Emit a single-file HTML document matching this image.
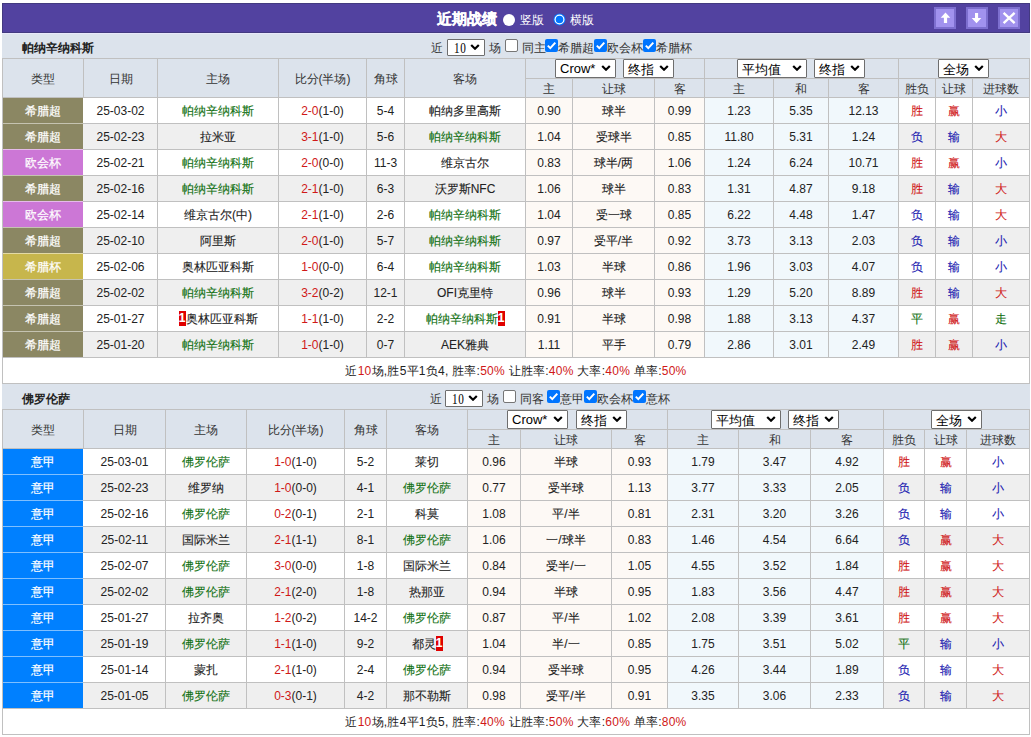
<!DOCTYPE html>
<html><head><meta charset="utf-8"><title>近期战绩</title>
<style>
html,body{margin:0;padding:0;background:#fff;}
body{position:relative;width:1031px;height:737px;overflow:hidden;font-family:'Liberation Sans', sans-serif;font-size:12px;color:#333;}
</style></head><body>
<div style="position:absolute;left:2px;top:3px;width:1028px;height:30px;box-sizing:border-box;background:#5242a0;border:1px solid #433a80;"></div><div style="position:absolute;left:437px;top:9px;white-space:nowrap;color:#fff;font:bold 15px 'Liberation Sans', sans-serif;line-height:20px;-webkit-text-stroke:0.3px #fff">近期战绩</div><div style="position:absolute;left:503px;top:14px;width:12px;height:12px;box-sizing:border-box;border-radius:50%;background:#fff;"></div><div style="position:absolute;left:520px;top:10px;white-space:nowrap;color:#fff;font:12px 'Liberation Sans', sans-serif;line-height:20px">竖版</div><svg style="position:absolute;left:553px;top:13px" width="13" height="13" viewBox="0 0 13 13"><circle cx="6.5" cy="6.5" r="6" fill="#0075ff"/><circle cx="6.5" cy="6.5" r="5" fill="#fff"/><circle cx="6.5" cy="6.5" r="3.8" fill="#0075ff"/></svg><div style="position:absolute;left:570px;top:10px;white-space:nowrap;color:#fff;font:12px 'Liberation Sans', sans-serif;line-height:20px">横版</div><div style="position:absolute;left:934px;top:7px;width:22px;height:22px;box-sizing:border-box;background:#a192ee;border:2px solid #7d6fcf;"><div style="position:absolute;left:-2px;top:-2px"><svg width="22" height="22" viewBox="0 0 22 22"><path d="M11.5 5.6 L16.3 10.8 L13.1 10.8 L13.1 16 L9.9 16 L9.9 10.8 L6.7 10.8 Z" fill="#fff"/></svg></div></div><div style="position:absolute;left:966px;top:7px;width:22px;height:22px;box-sizing:border-box;background:#a192ee;border:2px solid #7d6fcf;"><div style="position:absolute;left:-2px;top:-2px"><svg width="22" height="22" viewBox="0 0 22 22"><path d="M10.5 16.2 L15.3 11 L12.1 11 L12.1 6 L9 6 L9 11 L5.7 11 Z" fill="#fff"/></svg></div></div><div style="position:absolute;left:998px;top:7px;width:22px;height:22px;box-sizing:border-box;background:#a192ee;border:2px solid #7d6fcf;"><div style="position:absolute;left:-2px;top:-2px"><svg width="22" height="22" viewBox="0 0 22 22"><path d="M5.6 5.8 L16.6 16.2 M16.6 5.8 L5.6 16.2" stroke="#fff" stroke-width="2.4"/></svg></div></div><div style="position:absolute;left:2px;top:33px;width:1028px;height:1px;background:#e8e8fa;"></div><div style="position:absolute;left:2px;top:34px;width:1028px;height:24px;background:#dce3ec;"></div><div style="position:absolute;left:22px;top:41px;white-space:nowrap;font:bold 12px 'Liberation Sans', sans-serif;color:#222;line-height:14px">帕纳辛纳科斯</div><div style="position:absolute;left:431px;top:41px;white-space:nowrap;font:12px 'Liberation Sans', sans-serif;color:#333;line-height:14px;">近</div><div style="position:absolute;left:447px;top:39px;width:38px;height:17px;box-sizing:border-box;border:1px solid #6e6e6e;border-radius:1px;background:#fff;"><span style="position:absolute;left:6px;top:1px;line-height:15px;font:14px 'Liberation Serif', serif;color:#000;white-space:nowrap"><span style="display:inline-block;transform:scaleX(0.8);transform-origin:0 0;letter-spacing:0.8px">10</span></span><svg style="position:absolute;left:22px;top:4px" width="10" height="6" viewBox="0 0 10 6"><path d="M1.2 1 L5.0 4.7 L8.8 1" fill="none" stroke="#000" stroke-width="2.2"/></svg></div><div style="position:absolute;left:489px;top:41px;white-space:nowrap;font:12px 'Liberation Sans', sans-serif;color:#333;line-height:14px;">场</div><div style="position:absolute;left:505px;top:39px;width:13px;height:13px;box-sizing:border-box;border:1px solid #767676;border-radius:2px;background:#fff;"></div><div style="position:absolute;left:522px;top:41px;white-space:nowrap;font:12px 'Liberation Sans', sans-serif;color:#333;line-height:14px;">同主</div><div style="position:absolute;left:545px;top:39px;width:13px;height:13px;"><svg width="13" height="13" viewBox="0 0 13 13" style="position:absolute;left:0;top:0"><rect x="0" y="0" width="13" height="13" rx="2" fill="#0075ff"/><path d="M2.8 6.6 L5.3 9.1 L10.3 3.6" fill="none" stroke="#fff" stroke-width="2"/></svg></div><div style="position:absolute;left:558px;top:41px;white-space:nowrap;font:12px 'Liberation Sans', sans-serif;color:#333;line-height:14px;">希腊超</div><div style="position:absolute;left:594px;top:39px;width:13px;height:13px;"><svg width="13" height="13" viewBox="0 0 13 13" style="position:absolute;left:0;top:0"><rect x="0" y="0" width="13" height="13" rx="2" fill="#0075ff"/><path d="M2.8 6.6 L5.3 9.1 L10.3 3.6" fill="none" stroke="#fff" stroke-width="2"/></svg></div><div style="position:absolute;left:607px;top:41px;white-space:nowrap;font:12px 'Liberation Sans', sans-serif;color:#333;line-height:14px;">欧会杯</div><div style="position:absolute;left:643px;top:39px;width:13px;height:13px;"><svg width="13" height="13" viewBox="0 0 13 13" style="position:absolute;left:0;top:0"><rect x="0" y="0" width="13" height="13" rx="2" fill="#0075ff"/><path d="M2.8 6.6 L5.3 9.1 L10.3 3.6" fill="none" stroke="#fff" stroke-width="2"/></svg></div><div style="position:absolute;left:656px;top:41px;white-space:nowrap;font:12px 'Liberation Sans', sans-serif;color:#333;line-height:14px;">希腊杯</div><div style="position:absolute;left:2px;top:58px;width:1028px;height:39px;background:#dce3ec;"></div><div style="position:absolute;left:2px;top:97px;width:1028px;height:26px;background:#ffffff;"></div><div style="position:absolute;left:525px;top:97px;width:179px;height:26px;background:#fdf9f5;"></div><div style="position:absolute;left:704px;top:97px;width:194px;height:26px;background:#f1f8fc;"></div><div style="position:absolute;left:2px;top:97px;width:81px;height:26px;background:#8b8763;"></div><div style="position:absolute;left:2px;top:123px;width:1028px;height:26px;background:#efefef;"></div><div style="position:absolute;left:525px;top:123px;width:179px;height:26px;background:#fdf9f5;"></div><div style="position:absolute;left:704px;top:123px;width:194px;height:26px;background:#f1f8fc;"></div><div style="position:absolute;left:2px;top:123px;width:81px;height:26px;background:#8b8763;"></div><div style="position:absolute;left:2px;top:149px;width:1028px;height:26px;background:#ffffff;"></div><div style="position:absolute;left:525px;top:149px;width:179px;height:26px;background:#fdf9f5;"></div><div style="position:absolute;left:704px;top:149px;width:194px;height:26px;background:#f1f8fc;"></div><div style="position:absolute;left:2px;top:149px;width:81px;height:26px;background:#cc77d6;"></div><div style="position:absolute;left:2px;top:175px;width:1028px;height:26px;background:#efefef;"></div><div style="position:absolute;left:525px;top:175px;width:179px;height:26px;background:#fdf9f5;"></div><div style="position:absolute;left:704px;top:175px;width:194px;height:26px;background:#f1f8fc;"></div><div style="position:absolute;left:2px;top:175px;width:81px;height:26px;background:#8b8763;"></div><div style="position:absolute;left:2px;top:201px;width:1028px;height:26px;background:#ffffff;"></div><div style="position:absolute;left:525px;top:201px;width:179px;height:26px;background:#fdf9f5;"></div><div style="position:absolute;left:704px;top:201px;width:194px;height:26px;background:#f1f8fc;"></div><div style="position:absolute;left:2px;top:201px;width:81px;height:26px;background:#cc77d6;"></div><div style="position:absolute;left:2px;top:227px;width:1028px;height:26px;background:#efefef;"></div><div style="position:absolute;left:525px;top:227px;width:179px;height:26px;background:#fdf9f5;"></div><div style="position:absolute;left:704px;top:227px;width:194px;height:26px;background:#f1f8fc;"></div><div style="position:absolute;left:2px;top:227px;width:81px;height:26px;background:#8b8763;"></div><div style="position:absolute;left:2px;top:253px;width:1028px;height:26px;background:#ffffff;"></div><div style="position:absolute;left:525px;top:253px;width:179px;height:26px;background:#fdf9f5;"></div><div style="position:absolute;left:704px;top:253px;width:194px;height:26px;background:#f1f8fc;"></div><div style="position:absolute;left:2px;top:253px;width:81px;height:26px;background:#c7b64c;"></div><div style="position:absolute;left:2px;top:279px;width:1028px;height:26px;background:#efefef;"></div><div style="position:absolute;left:525px;top:279px;width:179px;height:26px;background:#fdf9f5;"></div><div style="position:absolute;left:704px;top:279px;width:194px;height:26px;background:#f1f8fc;"></div><div style="position:absolute;left:2px;top:279px;width:81px;height:26px;background:#8b8763;"></div><div style="position:absolute;left:2px;top:305px;width:1028px;height:26px;background:#ffffff;"></div><div style="position:absolute;left:525px;top:305px;width:179px;height:26px;background:#fdf9f5;"></div><div style="position:absolute;left:704px;top:305px;width:194px;height:26px;background:#f1f8fc;"></div><div style="position:absolute;left:2px;top:305px;width:81px;height:26px;background:#8b8763;"></div><div style="position:absolute;left:2px;top:331px;width:1028px;height:26px;background:#efefef;"></div><div style="position:absolute;left:525px;top:331px;width:179px;height:26px;background:#fdf9f5;"></div><div style="position:absolute;left:704px;top:331px;width:194px;height:26px;background:#f1f8fc;"></div><div style="position:absolute;left:2px;top:331px;width:81px;height:26px;background:#8b8763;"></div><div style="position:absolute;left:2px;top:357px;width:1028px;height:26px;background:#fff;"></div><div style="position:absolute;left:2px;top:58px;width:1028px;height:1px;background:#c0c0c0;"></div><div style="position:absolute;left:2px;top:97px;width:1028px;height:1px;background:#c0c0c0;"></div><div style="position:absolute;left:525px;top:78px;width:505px;height:1px;background:#c0c0c0;"></div><div style="position:absolute;left:2px;top:123px;width:1028px;height:1px;background:#c0c0c0;"></div><div style="position:absolute;left:2px;top:149px;width:1028px;height:1px;background:#c0c0c0;"></div><div style="position:absolute;left:2px;top:175px;width:1028px;height:1px;background:#c0c0c0;"></div><div style="position:absolute;left:2px;top:201px;width:1028px;height:1px;background:#c0c0c0;"></div><div style="position:absolute;left:2px;top:227px;width:1028px;height:1px;background:#c0c0c0;"></div><div style="position:absolute;left:2px;top:253px;width:1028px;height:1px;background:#c0c0c0;"></div><div style="position:absolute;left:2px;top:279px;width:1028px;height:1px;background:#c0c0c0;"></div><div style="position:absolute;left:2px;top:305px;width:1028px;height:1px;background:#c0c0c0;"></div><div style="position:absolute;left:2px;top:331px;width:1028px;height:1px;background:#c0c0c0;"></div><div style="position:absolute;left:2px;top:357px;width:1028px;height:1px;background:#c0c0c0;"></div><div style="position:absolute;left:2px;top:383px;width:1028px;height:1px;background:#c0c0c0;"></div><div style="position:absolute;left:2px;top:58px;width:1px;height:326px;background:#c0c0c0;"></div><div style="position:absolute;left:83px;top:58px;width:1px;height:300px;background:#c0c0c0;"></div><div style="position:absolute;left:157px;top:58px;width:1px;height:300px;background:#c0c0c0;"></div><div style="position:absolute;left:278px;top:58px;width:1px;height:300px;background:#c0c0c0;"></div><div style="position:absolute;left:366px;top:58px;width:1px;height:300px;background:#c0c0c0;"></div><div style="position:absolute;left:404px;top:58px;width:1px;height:300px;background:#c0c0c0;"></div><div style="position:absolute;left:525px;top:58px;width:1px;height:300px;background:#c0c0c0;"></div><div style="position:absolute;left:572px;top:78px;width:1px;height:280px;background:#c0c0c0;"></div><div style="position:absolute;left:654px;top:78px;width:1px;height:280px;background:#c0c0c0;"></div><div style="position:absolute;left:704px;top:58px;width:1px;height:300px;background:#c0c0c0;"></div><div style="position:absolute;left:773px;top:78px;width:1px;height:280px;background:#c0c0c0;"></div><div style="position:absolute;left:828px;top:78px;width:1px;height:280px;background:#c0c0c0;"></div><div style="position:absolute;left:898px;top:58px;width:1px;height:300px;background:#c0c0c0;"></div><div style="position:absolute;left:935px;top:78px;width:1px;height:280px;background:#c0c0c0;"></div><div style="position:absolute;left:972px;top:78px;width:1px;height:280px;background:#c0c0c0;"></div><div style="position:absolute;left:1029px;top:58px;width:1px;height:326px;background:#c0c0c0;"></div><div style="position:absolute;left:3px;top:123px;width:80px;height:1px;background:#c5c3b1;"></div><div style="position:absolute;left:3px;top:149px;width:80px;height:1px;background:#e5bbea;"></div><div style="position:absolute;left:3px;top:175px;width:80px;height:1px;background:#c5c3b1;"></div><div style="position:absolute;left:3px;top:201px;width:80px;height:1px;background:#e5bbea;"></div><div style="position:absolute;left:3px;top:227px;width:80px;height:1px;background:#c5c3b1;"></div><div style="position:absolute;left:3px;top:253px;width:80px;height:1px;background:#e3daa5;"></div><div style="position:absolute;left:3px;top:279px;width:80px;height:1px;background:#c5c3b1;"></div><div style="position:absolute;left:3px;top:305px;width:80px;height:1px;background:#c5c3b1;"></div><div style="position:absolute;left:3px;top:331px;width:80px;height:1px;background:#c5c3b1;"></div><div style="position:absolute;left:83px;top:98px;width:1px;height:25px;background:#ffffff;"></div><div style="position:absolute;left:83px;top:124px;width:1px;height:25px;background:#efefef;"></div><div style="position:absolute;left:83px;top:150px;width:1px;height:25px;background:#ffffff;"></div><div style="position:absolute;left:83px;top:176px;width:1px;height:25px;background:#efefef;"></div><div style="position:absolute;left:83px;top:202px;width:1px;height:25px;background:#ffffff;"></div><div style="position:absolute;left:83px;top:228px;width:1px;height:25px;background:#efefef;"></div><div style="position:absolute;left:83px;top:254px;width:1px;height:25px;background:#ffffff;"></div><div style="position:absolute;left:83px;top:280px;width:1px;height:25px;background:#efefef;"></div><div style="position:absolute;left:83px;top:306px;width:1px;height:25px;background:#ffffff;"></div><div style="position:absolute;left:83px;top:332px;width:1px;height:25px;background:#efefef;"></div><div style="font:12px 'Liberation Sans', sans-serif;color:#222;color:#333;position:absolute;left:3px;top:60px;width:80px;height:38px;line-height:38px;text-align:center;white-space:nowrap;">类型</div><div style="font:12px 'Liberation Sans', sans-serif;color:#222;color:#333;position:absolute;left:84px;top:60px;width:73px;height:38px;line-height:38px;text-align:center;white-space:nowrap;">日期</div><div style="font:12px 'Liberation Sans', sans-serif;color:#222;color:#333;position:absolute;left:158px;top:60px;width:120px;height:38px;line-height:38px;text-align:center;white-space:nowrap;">主场</div><div style="font:12px 'Liberation Sans', sans-serif;color:#222;color:#333;position:absolute;left:279px;top:60px;width:87px;height:38px;line-height:38px;text-align:center;white-space:nowrap;">比分(半场)</div><div style="font:12px 'Liberation Sans', sans-serif;color:#222;color:#333;position:absolute;left:367px;top:60px;width:37px;height:38px;line-height:38px;text-align:center;white-space:nowrap;">角球</div><div style="font:12px 'Liberation Sans', sans-serif;color:#222;color:#333;position:absolute;left:405px;top:60px;width:120px;height:38px;line-height:38px;text-align:center;white-space:nowrap;">客场</div><div style="font:12px 'Liberation Sans', sans-serif;color:#222;color:#333;position:absolute;left:526px;top:80px;width:46px;height:18px;line-height:18px;text-align:center;white-space:nowrap;">主</div><div style="font:12px 'Liberation Sans', sans-serif;color:#222;color:#333;position:absolute;left:573px;top:80px;width:81px;height:18px;line-height:18px;text-align:center;white-space:nowrap;">让球</div><div style="font:12px 'Liberation Sans', sans-serif;color:#222;color:#333;position:absolute;left:655px;top:80px;width:49px;height:18px;line-height:18px;text-align:center;white-space:nowrap;">客</div><div style="font:12px 'Liberation Sans', sans-serif;color:#222;color:#333;position:absolute;left:705px;top:80px;width:68px;height:18px;line-height:18px;text-align:center;white-space:nowrap;">主</div><div style="font:12px 'Liberation Sans', sans-serif;color:#222;color:#333;position:absolute;left:774px;top:80px;width:54px;height:18px;line-height:18px;text-align:center;white-space:nowrap;">和</div><div style="font:12px 'Liberation Sans', sans-serif;color:#222;color:#333;position:absolute;left:829px;top:80px;width:69px;height:18px;line-height:18px;text-align:center;white-space:nowrap;">客</div><div style="font:12px 'Liberation Sans', sans-serif;color:#222;color:#333;position:absolute;left:899px;top:80px;width:36px;height:18px;line-height:18px;text-align:center;white-space:nowrap;">胜负</div><div style="font:12px 'Liberation Sans', sans-serif;color:#222;color:#333;position:absolute;left:936px;top:80px;width:36px;height:18px;line-height:18px;text-align:center;white-space:nowrap;">让球</div><div style="font:12px 'Liberation Sans', sans-serif;color:#222;color:#333;position:absolute;left:973px;top:80px;width:56px;height:18px;line-height:18px;text-align:center;white-space:nowrap;">进球数</div><div style="position:absolute;left:555px;top:59px;width:61px;height:19px;box-sizing:border-box;border:1px solid #6e6e6e;border-radius:1px;background:#fff;"><span style="position:absolute;left:4px;top:1px;line-height:17px;font:13px 'Liberation Sans', sans-serif;color:#000;white-space:nowrap">Crow*</span><svg style="position:absolute;left:45px;top:5px" width="10" height="6" viewBox="0 0 10 6"><path d="M1.2 1 L5.0 4.7 L8.8 1" fill="none" stroke="#000" stroke-width="2.2"/></svg></div><div style="position:absolute;left:623px;top:59px;width:51px;height:19px;box-sizing:border-box;border:1px solid #6e6e6e;border-radius:1px;background:#fff;"><span style="position:absolute;left:4px;top:1px;line-height:17px;font:13px 'Liberation Sans', sans-serif;color:#000;white-space:nowrap">终指</span><svg style="position:absolute;left:35px;top:5px" width="10" height="6" viewBox="0 0 10 6"><path d="M1.2 1 L5.0 4.7 L8.8 1" fill="none" stroke="#000" stroke-width="2.2"/></svg></div><div style="position:absolute;left:737px;top:59px;width:70px;height:19px;box-sizing:border-box;border:1px solid #6e6e6e;border-radius:1px;background:#fff;"><span style="position:absolute;left:4px;top:1px;line-height:17px;font:13px 'Liberation Sans', sans-serif;color:#000;white-space:nowrap">平均值</span><svg style="position:absolute;left:54px;top:5px" width="10" height="6" viewBox="0 0 10 6"><path d="M1.2 1 L5.0 4.7 L8.8 1" fill="none" stroke="#000" stroke-width="2.2"/></svg></div><div style="position:absolute;left:814px;top:59px;width:51px;height:19px;box-sizing:border-box;border:1px solid #6e6e6e;border-radius:1px;background:#fff;"><span style="position:absolute;left:4px;top:1px;line-height:17px;font:13px 'Liberation Sans', sans-serif;color:#000;white-space:nowrap">终指</span><svg style="position:absolute;left:35px;top:5px" width="10" height="6" viewBox="0 0 10 6"><path d="M1.2 1 L5.0 4.7 L8.8 1" fill="none" stroke="#000" stroke-width="2.2"/></svg></div><div style="position:absolute;left:938px;top:59px;width:51px;height:19px;box-sizing:border-box;border:1px solid #6e6e6e;border-radius:1px;background:#fff;"><span style="position:absolute;left:4px;top:1px;line-height:17px;font:13px 'Liberation Sans', sans-serif;color:#000;white-space:nowrap">全场</span><svg style="position:absolute;left:35px;top:5px" width="10" height="6" viewBox="0 0 10 6"><path d="M1.2 1 L5.0 4.7 L8.8 1" fill="none" stroke="#000" stroke-width="2.2"/></svg></div><div style="font:12px 'Liberation Sans', sans-serif;color:#fff;-webkit-text-stroke:0.2px #fff;position:absolute;left:3px;top:99px;width:80px;height:25px;line-height:25px;text-align:center;white-space:nowrap;">希腊超</div><div style="font:12px 'Liberation Sans', sans-serif;color:#222;position:absolute;left:84px;top:99px;width:73px;height:25px;line-height:25px;text-align:center;white-space:nowrap;">25-03-02</div><div style="font:12px 'Liberation Sans', sans-serif;color:#222;-webkit-text-stroke:0.1px currentColor;color:#107010;position:absolute;left:158px;top:99px;width:120px;height:25px;line-height:25px;text-align:center;white-space:nowrap;">帕纳辛纳科斯</div><div style="font:12px 'Liberation Sans', sans-serif;color:#222;position:absolute;left:279px;top:99px;width:87px;height:25px;line-height:25px;text-align:center;white-space:nowrap;"><span style="color:#d01818">2-0</span>(1-0)</div><div style="font:12px 'Liberation Sans', sans-serif;color:#222;position:absolute;left:367px;top:99px;width:37px;height:25px;line-height:25px;text-align:center;white-space:nowrap;">5-4</div><div style="font:12px 'Liberation Sans', sans-serif;color:#222;-webkit-text-stroke:0.1px currentColor;position:absolute;left:405px;top:99px;width:120px;height:25px;line-height:25px;text-align:center;white-space:nowrap;">帕纳多里高斯</div><div style="font:12px 'Liberation Sans', sans-serif;color:#222;position:absolute;left:526px;top:99px;width:46px;height:25px;line-height:25px;text-align:center;white-space:nowrap;">0.90</div><div style="font:12px 'Liberation Sans', sans-serif;color:#222;-webkit-text-stroke:0.1px currentColor;position:absolute;left:573px;top:99px;width:81px;height:25px;line-height:25px;text-align:center;white-space:nowrap;">球半</div><div style="font:12px 'Liberation Sans', sans-serif;color:#222;position:absolute;left:655px;top:99px;width:49px;height:25px;line-height:25px;text-align:center;white-space:nowrap;">0.99</div><div style="font:12px 'Liberation Sans', sans-serif;color:#222;position:absolute;left:705px;top:99px;width:68px;height:25px;line-height:25px;text-align:center;white-space:nowrap;">1.23</div><div style="font:12px 'Liberation Sans', sans-serif;color:#222;position:absolute;left:774px;top:99px;width:54px;height:25px;line-height:25px;text-align:center;white-space:nowrap;">5.35</div><div style="font:12px 'Liberation Sans', sans-serif;color:#222;position:absolute;left:829px;top:99px;width:69px;height:25px;line-height:25px;text-align:center;white-space:nowrap;">12.13</div><div style="font:12px 'Liberation Sans', sans-serif;color:#222;-webkit-text-stroke:0.1px currentColor;color:#d01818;position:absolute;left:899px;top:99px;width:36px;height:25px;line-height:25px;text-align:center;white-space:nowrap;">胜</div><div style="font:12px 'Liberation Sans', sans-serif;color:#222;-webkit-text-stroke:0.1px currentColor;color:#d01818;position:absolute;left:936px;top:99px;width:36px;height:25px;line-height:25px;text-align:center;white-space:nowrap;">赢</div><div style="font:12px 'Liberation Sans', sans-serif;color:#222;-webkit-text-stroke:0.1px currentColor;color:#1818b0;position:absolute;left:973px;top:99px;width:56px;height:25px;line-height:25px;text-align:center;white-space:nowrap;">小</div><div style="font:12px 'Liberation Sans', sans-serif;color:#fff;-webkit-text-stroke:0.2px #fff;position:absolute;left:3px;top:125px;width:80px;height:25px;line-height:25px;text-align:center;white-space:nowrap;">希腊超</div><div style="font:12px 'Liberation Sans', sans-serif;color:#222;position:absolute;left:84px;top:125px;width:73px;height:25px;line-height:25px;text-align:center;white-space:nowrap;">25-02-23</div><div style="font:12px 'Liberation Sans', sans-serif;color:#222;-webkit-text-stroke:0.1px currentColor;position:absolute;left:158px;top:125px;width:120px;height:25px;line-height:25px;text-align:center;white-space:nowrap;">拉米亚</div><div style="font:12px 'Liberation Sans', sans-serif;color:#222;position:absolute;left:279px;top:125px;width:87px;height:25px;line-height:25px;text-align:center;white-space:nowrap;"><span style="color:#d01818">3-1</span>(1-0)</div><div style="font:12px 'Liberation Sans', sans-serif;color:#222;position:absolute;left:367px;top:125px;width:37px;height:25px;line-height:25px;text-align:center;white-space:nowrap;">5-6</div><div style="font:12px 'Liberation Sans', sans-serif;color:#222;-webkit-text-stroke:0.1px currentColor;color:#107010;position:absolute;left:405px;top:125px;width:120px;height:25px;line-height:25px;text-align:center;white-space:nowrap;">帕纳辛纳科斯</div><div style="font:12px 'Liberation Sans', sans-serif;color:#222;position:absolute;left:526px;top:125px;width:46px;height:25px;line-height:25px;text-align:center;white-space:nowrap;">1.04</div><div style="font:12px 'Liberation Sans', sans-serif;color:#222;-webkit-text-stroke:0.1px currentColor;position:absolute;left:573px;top:125px;width:81px;height:25px;line-height:25px;text-align:center;white-space:nowrap;">受球半</div><div style="font:12px 'Liberation Sans', sans-serif;color:#222;position:absolute;left:655px;top:125px;width:49px;height:25px;line-height:25px;text-align:center;white-space:nowrap;">0.85</div><div style="font:12px 'Liberation Sans', sans-serif;color:#222;position:absolute;left:705px;top:125px;width:68px;height:25px;line-height:25px;text-align:center;white-space:nowrap;">11.80</div><div style="font:12px 'Liberation Sans', sans-serif;color:#222;position:absolute;left:774px;top:125px;width:54px;height:25px;line-height:25px;text-align:center;white-space:nowrap;">5.31</div><div style="font:12px 'Liberation Sans', sans-serif;color:#222;position:absolute;left:829px;top:125px;width:69px;height:25px;line-height:25px;text-align:center;white-space:nowrap;">1.24</div><div style="font:12px 'Liberation Sans', sans-serif;color:#222;-webkit-text-stroke:0.1px currentColor;color:#1818b0;position:absolute;left:899px;top:125px;width:36px;height:25px;line-height:25px;text-align:center;white-space:nowrap;">负</div><div style="font:12px 'Liberation Sans', sans-serif;color:#222;-webkit-text-stroke:0.1px currentColor;color:#1818b0;position:absolute;left:936px;top:125px;width:36px;height:25px;line-height:25px;text-align:center;white-space:nowrap;">输</div><div style="font:12px 'Liberation Sans', sans-serif;color:#222;-webkit-text-stroke:0.1px currentColor;color:#d01818;position:absolute;left:973px;top:125px;width:56px;height:25px;line-height:25px;text-align:center;white-space:nowrap;">大</div><div style="font:12px 'Liberation Sans', sans-serif;color:#fff;-webkit-text-stroke:0.2px #fff;position:absolute;left:3px;top:151px;width:80px;height:25px;line-height:25px;text-align:center;white-space:nowrap;">欧会杯</div><div style="font:12px 'Liberation Sans', sans-serif;color:#222;position:absolute;left:84px;top:151px;width:73px;height:25px;line-height:25px;text-align:center;white-space:nowrap;">25-02-21</div><div style="font:12px 'Liberation Sans', sans-serif;color:#222;-webkit-text-stroke:0.1px currentColor;color:#107010;position:absolute;left:158px;top:151px;width:120px;height:25px;line-height:25px;text-align:center;white-space:nowrap;">帕纳辛纳科斯</div><div style="font:12px 'Liberation Sans', sans-serif;color:#222;position:absolute;left:279px;top:151px;width:87px;height:25px;line-height:25px;text-align:center;white-space:nowrap;"><span style="color:#d01818">2-0</span>(0-0)</div><div style="font:12px 'Liberation Sans', sans-serif;color:#222;position:absolute;left:367px;top:151px;width:37px;height:25px;line-height:25px;text-align:center;white-space:nowrap;">11-3</div><div style="font:12px 'Liberation Sans', sans-serif;color:#222;-webkit-text-stroke:0.1px currentColor;position:absolute;left:405px;top:151px;width:120px;height:25px;line-height:25px;text-align:center;white-space:nowrap;">维京古尔</div><div style="font:12px 'Liberation Sans', sans-serif;color:#222;position:absolute;left:526px;top:151px;width:46px;height:25px;line-height:25px;text-align:center;white-space:nowrap;">0.83</div><div style="font:12px 'Liberation Sans', sans-serif;color:#222;-webkit-text-stroke:0.1px currentColor;position:absolute;left:573px;top:151px;width:81px;height:25px;line-height:25px;text-align:center;white-space:nowrap;">球半/两</div><div style="font:12px 'Liberation Sans', sans-serif;color:#222;position:absolute;left:655px;top:151px;width:49px;height:25px;line-height:25px;text-align:center;white-space:nowrap;">1.06</div><div style="font:12px 'Liberation Sans', sans-serif;color:#222;position:absolute;left:705px;top:151px;width:68px;height:25px;line-height:25px;text-align:center;white-space:nowrap;">1.24</div><div style="font:12px 'Liberation Sans', sans-serif;color:#222;position:absolute;left:774px;top:151px;width:54px;height:25px;line-height:25px;text-align:center;white-space:nowrap;">6.24</div><div style="font:12px 'Liberation Sans', sans-serif;color:#222;position:absolute;left:829px;top:151px;width:69px;height:25px;line-height:25px;text-align:center;white-space:nowrap;">10.71</div><div style="font:12px 'Liberation Sans', sans-serif;color:#222;-webkit-text-stroke:0.1px currentColor;color:#d01818;position:absolute;left:899px;top:151px;width:36px;height:25px;line-height:25px;text-align:center;white-space:nowrap;">胜</div><div style="font:12px 'Liberation Sans', sans-serif;color:#222;-webkit-text-stroke:0.1px currentColor;color:#d01818;position:absolute;left:936px;top:151px;width:36px;height:25px;line-height:25px;text-align:center;white-space:nowrap;">赢</div><div style="font:12px 'Liberation Sans', sans-serif;color:#222;-webkit-text-stroke:0.1px currentColor;color:#1818b0;position:absolute;left:973px;top:151px;width:56px;height:25px;line-height:25px;text-align:center;white-space:nowrap;">小</div><div style="font:12px 'Liberation Sans', sans-serif;color:#fff;-webkit-text-stroke:0.2px #fff;position:absolute;left:3px;top:177px;width:80px;height:25px;line-height:25px;text-align:center;white-space:nowrap;">希腊超</div><div style="font:12px 'Liberation Sans', sans-serif;color:#222;position:absolute;left:84px;top:177px;width:73px;height:25px;line-height:25px;text-align:center;white-space:nowrap;">25-02-16</div><div style="font:12px 'Liberation Sans', sans-serif;color:#222;-webkit-text-stroke:0.1px currentColor;color:#107010;position:absolute;left:158px;top:177px;width:120px;height:25px;line-height:25px;text-align:center;white-space:nowrap;">帕纳辛纳科斯</div><div style="font:12px 'Liberation Sans', sans-serif;color:#222;position:absolute;left:279px;top:177px;width:87px;height:25px;line-height:25px;text-align:center;white-space:nowrap;"><span style="color:#d01818">2-1</span>(1-0)</div><div style="font:12px 'Liberation Sans', sans-serif;color:#222;position:absolute;left:367px;top:177px;width:37px;height:25px;line-height:25px;text-align:center;white-space:nowrap;">6-3</div><div style="font:12px 'Liberation Sans', sans-serif;color:#222;-webkit-text-stroke:0.1px currentColor;position:absolute;left:405px;top:177px;width:120px;height:25px;line-height:25px;text-align:center;white-space:nowrap;">沃罗斯NFC</div><div style="font:12px 'Liberation Sans', sans-serif;color:#222;position:absolute;left:526px;top:177px;width:46px;height:25px;line-height:25px;text-align:center;white-space:nowrap;">1.06</div><div style="font:12px 'Liberation Sans', sans-serif;color:#222;-webkit-text-stroke:0.1px currentColor;position:absolute;left:573px;top:177px;width:81px;height:25px;line-height:25px;text-align:center;white-space:nowrap;">球半</div><div style="font:12px 'Liberation Sans', sans-serif;color:#222;position:absolute;left:655px;top:177px;width:49px;height:25px;line-height:25px;text-align:center;white-space:nowrap;">0.83</div><div style="font:12px 'Liberation Sans', sans-serif;color:#222;position:absolute;left:705px;top:177px;width:68px;height:25px;line-height:25px;text-align:center;white-space:nowrap;">1.31</div><div style="font:12px 'Liberation Sans', sans-serif;color:#222;position:absolute;left:774px;top:177px;width:54px;height:25px;line-height:25px;text-align:center;white-space:nowrap;">4.87</div><div style="font:12px 'Liberation Sans', sans-serif;color:#222;position:absolute;left:829px;top:177px;width:69px;height:25px;line-height:25px;text-align:center;white-space:nowrap;">9.18</div><div style="font:12px 'Liberation Sans', sans-serif;color:#222;-webkit-text-stroke:0.1px currentColor;color:#d01818;position:absolute;left:899px;top:177px;width:36px;height:25px;line-height:25px;text-align:center;white-space:nowrap;">胜</div><div style="font:12px 'Liberation Sans', sans-serif;color:#222;-webkit-text-stroke:0.1px currentColor;color:#1818b0;position:absolute;left:936px;top:177px;width:36px;height:25px;line-height:25px;text-align:center;white-space:nowrap;">输</div><div style="font:12px 'Liberation Sans', sans-serif;color:#222;-webkit-text-stroke:0.1px currentColor;color:#d01818;position:absolute;left:973px;top:177px;width:56px;height:25px;line-height:25px;text-align:center;white-space:nowrap;">大</div><div style="font:12px 'Liberation Sans', sans-serif;color:#fff;-webkit-text-stroke:0.2px #fff;position:absolute;left:3px;top:203px;width:80px;height:25px;line-height:25px;text-align:center;white-space:nowrap;">欧会杯</div><div style="font:12px 'Liberation Sans', sans-serif;color:#222;position:absolute;left:84px;top:203px;width:73px;height:25px;line-height:25px;text-align:center;white-space:nowrap;">25-02-14</div><div style="font:12px 'Liberation Sans', sans-serif;color:#222;-webkit-text-stroke:0.1px currentColor;position:absolute;left:158px;top:203px;width:120px;height:25px;line-height:25px;text-align:center;white-space:nowrap;">维京古尔(中)</div><div style="font:12px 'Liberation Sans', sans-serif;color:#222;position:absolute;left:279px;top:203px;width:87px;height:25px;line-height:25px;text-align:center;white-space:nowrap;"><span style="color:#d01818">2-1</span>(1-0)</div><div style="font:12px 'Liberation Sans', sans-serif;color:#222;position:absolute;left:367px;top:203px;width:37px;height:25px;line-height:25px;text-align:center;white-space:nowrap;">2-6</div><div style="font:12px 'Liberation Sans', sans-serif;color:#222;-webkit-text-stroke:0.1px currentColor;color:#107010;position:absolute;left:405px;top:203px;width:120px;height:25px;line-height:25px;text-align:center;white-space:nowrap;">帕纳辛纳科斯</div><div style="font:12px 'Liberation Sans', sans-serif;color:#222;position:absolute;left:526px;top:203px;width:46px;height:25px;line-height:25px;text-align:center;white-space:nowrap;">1.04</div><div style="font:12px 'Liberation Sans', sans-serif;color:#222;-webkit-text-stroke:0.1px currentColor;position:absolute;left:573px;top:203px;width:81px;height:25px;line-height:25px;text-align:center;white-space:nowrap;">受一球</div><div style="font:12px 'Liberation Sans', sans-serif;color:#222;position:absolute;left:655px;top:203px;width:49px;height:25px;line-height:25px;text-align:center;white-space:nowrap;">0.85</div><div style="font:12px 'Liberation Sans', sans-serif;color:#222;position:absolute;left:705px;top:203px;width:68px;height:25px;line-height:25px;text-align:center;white-space:nowrap;">6.22</div><div style="font:12px 'Liberation Sans', sans-serif;color:#222;position:absolute;left:774px;top:203px;width:54px;height:25px;line-height:25px;text-align:center;white-space:nowrap;">4.48</div><div style="font:12px 'Liberation Sans', sans-serif;color:#222;position:absolute;left:829px;top:203px;width:69px;height:25px;line-height:25px;text-align:center;white-space:nowrap;">1.47</div><div style="font:12px 'Liberation Sans', sans-serif;color:#222;-webkit-text-stroke:0.1px currentColor;color:#1818b0;position:absolute;left:899px;top:203px;width:36px;height:25px;line-height:25px;text-align:center;white-space:nowrap;">负</div><div style="font:12px 'Liberation Sans', sans-serif;color:#222;-webkit-text-stroke:0.1px currentColor;color:#1818b0;position:absolute;left:936px;top:203px;width:36px;height:25px;line-height:25px;text-align:center;white-space:nowrap;">输</div><div style="font:12px 'Liberation Sans', sans-serif;color:#222;-webkit-text-stroke:0.1px currentColor;color:#d01818;position:absolute;left:973px;top:203px;width:56px;height:25px;line-height:25px;text-align:center;white-space:nowrap;">大</div><div style="font:12px 'Liberation Sans', sans-serif;color:#fff;-webkit-text-stroke:0.2px #fff;position:absolute;left:3px;top:229px;width:80px;height:25px;line-height:25px;text-align:center;white-space:nowrap;">希腊超</div><div style="font:12px 'Liberation Sans', sans-serif;color:#222;position:absolute;left:84px;top:229px;width:73px;height:25px;line-height:25px;text-align:center;white-space:nowrap;">25-02-10</div><div style="font:12px 'Liberation Sans', sans-serif;color:#222;-webkit-text-stroke:0.1px currentColor;position:absolute;left:158px;top:229px;width:120px;height:25px;line-height:25px;text-align:center;white-space:nowrap;">阿里斯</div><div style="font:12px 'Liberation Sans', sans-serif;color:#222;position:absolute;left:279px;top:229px;width:87px;height:25px;line-height:25px;text-align:center;white-space:nowrap;"><span style="color:#d01818">2-0</span>(1-0)</div><div style="font:12px 'Liberation Sans', sans-serif;color:#222;position:absolute;left:367px;top:229px;width:37px;height:25px;line-height:25px;text-align:center;white-space:nowrap;">5-7</div><div style="font:12px 'Liberation Sans', sans-serif;color:#222;-webkit-text-stroke:0.1px currentColor;color:#107010;position:absolute;left:405px;top:229px;width:120px;height:25px;line-height:25px;text-align:center;white-space:nowrap;">帕纳辛纳科斯</div><div style="font:12px 'Liberation Sans', sans-serif;color:#222;position:absolute;left:526px;top:229px;width:46px;height:25px;line-height:25px;text-align:center;white-space:nowrap;">0.97</div><div style="font:12px 'Liberation Sans', sans-serif;color:#222;-webkit-text-stroke:0.1px currentColor;position:absolute;left:573px;top:229px;width:81px;height:25px;line-height:25px;text-align:center;white-space:nowrap;">受平/半</div><div style="font:12px 'Liberation Sans', sans-serif;color:#222;position:absolute;left:655px;top:229px;width:49px;height:25px;line-height:25px;text-align:center;white-space:nowrap;">0.92</div><div style="font:12px 'Liberation Sans', sans-serif;color:#222;position:absolute;left:705px;top:229px;width:68px;height:25px;line-height:25px;text-align:center;white-space:nowrap;">3.73</div><div style="font:12px 'Liberation Sans', sans-serif;color:#222;position:absolute;left:774px;top:229px;width:54px;height:25px;line-height:25px;text-align:center;white-space:nowrap;">3.13</div><div style="font:12px 'Liberation Sans', sans-serif;color:#222;position:absolute;left:829px;top:229px;width:69px;height:25px;line-height:25px;text-align:center;white-space:nowrap;">2.03</div><div style="font:12px 'Liberation Sans', sans-serif;color:#222;-webkit-text-stroke:0.1px currentColor;color:#1818b0;position:absolute;left:899px;top:229px;width:36px;height:25px;line-height:25px;text-align:center;white-space:nowrap;">负</div><div style="font:12px 'Liberation Sans', sans-serif;color:#222;-webkit-text-stroke:0.1px currentColor;color:#1818b0;position:absolute;left:936px;top:229px;width:36px;height:25px;line-height:25px;text-align:center;white-space:nowrap;">输</div><div style="font:12px 'Liberation Sans', sans-serif;color:#222;-webkit-text-stroke:0.1px currentColor;color:#1818b0;position:absolute;left:973px;top:229px;width:56px;height:25px;line-height:25px;text-align:center;white-space:nowrap;">小</div><div style="font:12px 'Liberation Sans', sans-serif;color:#fff;-webkit-text-stroke:0.2px #fff;position:absolute;left:3px;top:255px;width:80px;height:25px;line-height:25px;text-align:center;white-space:nowrap;">希腊杯</div><div style="font:12px 'Liberation Sans', sans-serif;color:#222;position:absolute;left:84px;top:255px;width:73px;height:25px;line-height:25px;text-align:center;white-space:nowrap;">25-02-06</div><div style="font:12px 'Liberation Sans', sans-serif;color:#222;-webkit-text-stroke:0.1px currentColor;position:absolute;left:158px;top:255px;width:120px;height:25px;line-height:25px;text-align:center;white-space:nowrap;">奥林匹亚科斯</div><div style="font:12px 'Liberation Sans', sans-serif;color:#222;position:absolute;left:279px;top:255px;width:87px;height:25px;line-height:25px;text-align:center;white-space:nowrap;"><span style="color:#d01818">1-0</span>(0-0)</div><div style="font:12px 'Liberation Sans', sans-serif;color:#222;position:absolute;left:367px;top:255px;width:37px;height:25px;line-height:25px;text-align:center;white-space:nowrap;">6-4</div><div style="font:12px 'Liberation Sans', sans-serif;color:#222;-webkit-text-stroke:0.1px currentColor;color:#107010;position:absolute;left:405px;top:255px;width:120px;height:25px;line-height:25px;text-align:center;white-space:nowrap;">帕纳辛纳科斯</div><div style="font:12px 'Liberation Sans', sans-serif;color:#222;position:absolute;left:526px;top:255px;width:46px;height:25px;line-height:25px;text-align:center;white-space:nowrap;">1.03</div><div style="font:12px 'Liberation Sans', sans-serif;color:#222;-webkit-text-stroke:0.1px currentColor;position:absolute;left:573px;top:255px;width:81px;height:25px;line-height:25px;text-align:center;white-space:nowrap;">半球</div><div style="font:12px 'Liberation Sans', sans-serif;color:#222;position:absolute;left:655px;top:255px;width:49px;height:25px;line-height:25px;text-align:center;white-space:nowrap;">0.86</div><div style="font:12px 'Liberation Sans', sans-serif;color:#222;position:absolute;left:705px;top:255px;width:68px;height:25px;line-height:25px;text-align:center;white-space:nowrap;">1.96</div><div style="font:12px 'Liberation Sans', sans-serif;color:#222;position:absolute;left:774px;top:255px;width:54px;height:25px;line-height:25px;text-align:center;white-space:nowrap;">3.03</div><div style="font:12px 'Liberation Sans', sans-serif;color:#222;position:absolute;left:829px;top:255px;width:69px;height:25px;line-height:25px;text-align:center;white-space:nowrap;">4.07</div><div style="font:12px 'Liberation Sans', sans-serif;color:#222;-webkit-text-stroke:0.1px currentColor;color:#1818b0;position:absolute;left:899px;top:255px;width:36px;height:25px;line-height:25px;text-align:center;white-space:nowrap;">负</div><div style="font:12px 'Liberation Sans', sans-serif;color:#222;-webkit-text-stroke:0.1px currentColor;color:#1818b0;position:absolute;left:936px;top:255px;width:36px;height:25px;line-height:25px;text-align:center;white-space:nowrap;">输</div><div style="font:12px 'Liberation Sans', sans-serif;color:#222;-webkit-text-stroke:0.1px currentColor;color:#1818b0;position:absolute;left:973px;top:255px;width:56px;height:25px;line-height:25px;text-align:center;white-space:nowrap;">小</div><div style="font:12px 'Liberation Sans', sans-serif;color:#fff;-webkit-text-stroke:0.2px #fff;position:absolute;left:3px;top:281px;width:80px;height:25px;line-height:25px;text-align:center;white-space:nowrap;">希腊超</div><div style="font:12px 'Liberation Sans', sans-serif;color:#222;position:absolute;left:84px;top:281px;width:73px;height:25px;line-height:25px;text-align:center;white-space:nowrap;">25-02-02</div><div style="font:12px 'Liberation Sans', sans-serif;color:#222;-webkit-text-stroke:0.1px currentColor;color:#107010;position:absolute;left:158px;top:281px;width:120px;height:25px;line-height:25px;text-align:center;white-space:nowrap;">帕纳辛纳科斯</div><div style="font:12px 'Liberation Sans', sans-serif;color:#222;position:absolute;left:279px;top:281px;width:87px;height:25px;line-height:25px;text-align:center;white-space:nowrap;"><span style="color:#d01818">3-2</span>(0-2)</div><div style="font:12px 'Liberation Sans', sans-serif;color:#222;position:absolute;left:367px;top:281px;width:37px;height:25px;line-height:25px;text-align:center;white-space:nowrap;">12-1</div><div style="font:12px 'Liberation Sans', sans-serif;color:#222;-webkit-text-stroke:0.1px currentColor;position:absolute;left:405px;top:281px;width:120px;height:25px;line-height:25px;text-align:center;white-space:nowrap;">OFI克里特</div><div style="font:12px 'Liberation Sans', sans-serif;color:#222;position:absolute;left:526px;top:281px;width:46px;height:25px;line-height:25px;text-align:center;white-space:nowrap;">0.96</div><div style="font:12px 'Liberation Sans', sans-serif;color:#222;-webkit-text-stroke:0.1px currentColor;position:absolute;left:573px;top:281px;width:81px;height:25px;line-height:25px;text-align:center;white-space:nowrap;">球半</div><div style="font:12px 'Liberation Sans', sans-serif;color:#222;position:absolute;left:655px;top:281px;width:49px;height:25px;line-height:25px;text-align:center;white-space:nowrap;">0.93</div><div style="font:12px 'Liberation Sans', sans-serif;color:#222;position:absolute;left:705px;top:281px;width:68px;height:25px;line-height:25px;text-align:center;white-space:nowrap;">1.29</div><div style="font:12px 'Liberation Sans', sans-serif;color:#222;position:absolute;left:774px;top:281px;width:54px;height:25px;line-height:25px;text-align:center;white-space:nowrap;">5.20</div><div style="font:12px 'Liberation Sans', sans-serif;color:#222;position:absolute;left:829px;top:281px;width:69px;height:25px;line-height:25px;text-align:center;white-space:nowrap;">8.89</div><div style="font:12px 'Liberation Sans', sans-serif;color:#222;-webkit-text-stroke:0.1px currentColor;color:#d01818;position:absolute;left:899px;top:281px;width:36px;height:25px;line-height:25px;text-align:center;white-space:nowrap;">胜</div><div style="font:12px 'Liberation Sans', sans-serif;color:#222;-webkit-text-stroke:0.1px currentColor;color:#1818b0;position:absolute;left:936px;top:281px;width:36px;height:25px;line-height:25px;text-align:center;white-space:nowrap;">输</div><div style="font:12px 'Liberation Sans', sans-serif;color:#222;-webkit-text-stroke:0.1px currentColor;color:#d01818;position:absolute;left:973px;top:281px;width:56px;height:25px;line-height:25px;text-align:center;white-space:nowrap;">大</div><div style="font:12px 'Liberation Sans', sans-serif;color:#fff;-webkit-text-stroke:0.2px #fff;position:absolute;left:3px;top:307px;width:80px;height:25px;line-height:25px;text-align:center;white-space:nowrap;">希腊超</div><div style="font:12px 'Liberation Sans', sans-serif;color:#222;position:absolute;left:84px;top:307px;width:73px;height:25px;line-height:25px;text-align:center;white-space:nowrap;">25-01-27</div><div style="font:12px 'Liberation Sans', sans-serif;color:#222;-webkit-text-stroke:0.1px currentColor;position:absolute;left:158px;top:307px;width:120px;height:25px;line-height:25px;text-align:center;white-space:nowrap;"><span style="display:inline-block;width:7px;height:15px;background:#e00000;color:#fff;font-weight:bold;font-size:12px;line-height:15px;text-align:center;vertical-align:1px">1</span>奥林匹亚科斯</div><div style="font:12px 'Liberation Sans', sans-serif;color:#222;position:absolute;left:279px;top:307px;width:87px;height:25px;line-height:25px;text-align:center;white-space:nowrap;"><span style="color:#d01818">1-1</span>(1-0)</div><div style="font:12px 'Liberation Sans', sans-serif;color:#222;position:absolute;left:367px;top:307px;width:37px;height:25px;line-height:25px;text-align:center;white-space:nowrap;">2-2</div><div style="font:12px 'Liberation Sans', sans-serif;color:#222;-webkit-text-stroke:0.1px currentColor;color:#107010;position:absolute;left:405px;top:307px;width:120px;height:25px;line-height:25px;text-align:center;white-space:nowrap;">帕纳辛纳科斯<span style="display:inline-block;width:7px;height:15px;background:#e00000;color:#fff;font-weight:bold;font-size:12px;line-height:15px;text-align:center;vertical-align:1px">1</span></div><div style="font:12px 'Liberation Sans', sans-serif;color:#222;position:absolute;left:526px;top:307px;width:46px;height:25px;line-height:25px;text-align:center;white-space:nowrap;">0.91</div><div style="font:12px 'Liberation Sans', sans-serif;color:#222;-webkit-text-stroke:0.1px currentColor;position:absolute;left:573px;top:307px;width:81px;height:25px;line-height:25px;text-align:center;white-space:nowrap;">半球</div><div style="font:12px 'Liberation Sans', sans-serif;color:#222;position:absolute;left:655px;top:307px;width:49px;height:25px;line-height:25px;text-align:center;white-space:nowrap;">0.98</div><div style="font:12px 'Liberation Sans', sans-serif;color:#222;position:absolute;left:705px;top:307px;width:68px;height:25px;line-height:25px;text-align:center;white-space:nowrap;">1.88</div><div style="font:12px 'Liberation Sans', sans-serif;color:#222;position:absolute;left:774px;top:307px;width:54px;height:25px;line-height:25px;text-align:center;white-space:nowrap;">3.13</div><div style="font:12px 'Liberation Sans', sans-serif;color:#222;position:absolute;left:829px;top:307px;width:69px;height:25px;line-height:25px;text-align:center;white-space:nowrap;">4.37</div><div style="font:12px 'Liberation Sans', sans-serif;color:#222;-webkit-text-stroke:0.1px currentColor;color:#107010;position:absolute;left:899px;top:307px;width:36px;height:25px;line-height:25px;text-align:center;white-space:nowrap;">平</div><div style="font:12px 'Liberation Sans', sans-serif;color:#222;-webkit-text-stroke:0.1px currentColor;color:#d01818;position:absolute;left:936px;top:307px;width:36px;height:25px;line-height:25px;text-align:center;white-space:nowrap;">赢</div><div style="font:12px 'Liberation Sans', sans-serif;color:#222;-webkit-text-stroke:0.1px currentColor;color:#107010;position:absolute;left:973px;top:307px;width:56px;height:25px;line-height:25px;text-align:center;white-space:nowrap;">走</div><div style="font:12px 'Liberation Sans', sans-serif;color:#fff;-webkit-text-stroke:0.2px #fff;position:absolute;left:3px;top:333px;width:80px;height:25px;line-height:25px;text-align:center;white-space:nowrap;">希腊超</div><div style="font:12px 'Liberation Sans', sans-serif;color:#222;position:absolute;left:84px;top:333px;width:73px;height:25px;line-height:25px;text-align:center;white-space:nowrap;">25-01-20</div><div style="font:12px 'Liberation Sans', sans-serif;color:#222;-webkit-text-stroke:0.1px currentColor;color:#107010;position:absolute;left:158px;top:333px;width:120px;height:25px;line-height:25px;text-align:center;white-space:nowrap;">帕纳辛纳科斯</div><div style="font:12px 'Liberation Sans', sans-serif;color:#222;position:absolute;left:279px;top:333px;width:87px;height:25px;line-height:25px;text-align:center;white-space:nowrap;"><span style="color:#d01818">1-0</span>(1-0)</div><div style="font:12px 'Liberation Sans', sans-serif;color:#222;position:absolute;left:367px;top:333px;width:37px;height:25px;line-height:25px;text-align:center;white-space:nowrap;">0-7</div><div style="font:12px 'Liberation Sans', sans-serif;color:#222;-webkit-text-stroke:0.1px currentColor;position:absolute;left:405px;top:333px;width:120px;height:25px;line-height:25px;text-align:center;white-space:nowrap;">AEK雅典</div><div style="font:12px 'Liberation Sans', sans-serif;color:#222;position:absolute;left:526px;top:333px;width:46px;height:25px;line-height:25px;text-align:center;white-space:nowrap;">1.11</div><div style="font:12px 'Liberation Sans', sans-serif;color:#222;-webkit-text-stroke:0.1px currentColor;position:absolute;left:573px;top:333px;width:81px;height:25px;line-height:25px;text-align:center;white-space:nowrap;">平手</div><div style="font:12px 'Liberation Sans', sans-serif;color:#222;position:absolute;left:655px;top:333px;width:49px;height:25px;line-height:25px;text-align:center;white-space:nowrap;">0.79</div><div style="font:12px 'Liberation Sans', sans-serif;color:#222;position:absolute;left:705px;top:333px;width:68px;height:25px;line-height:25px;text-align:center;white-space:nowrap;">2.86</div><div style="font:12px 'Liberation Sans', sans-serif;color:#222;position:absolute;left:774px;top:333px;width:54px;height:25px;line-height:25px;text-align:center;white-space:nowrap;">3.01</div><div style="font:12px 'Liberation Sans', sans-serif;color:#222;position:absolute;left:829px;top:333px;width:69px;height:25px;line-height:25px;text-align:center;white-space:nowrap;">2.49</div><div style="font:12px 'Liberation Sans', sans-serif;color:#222;-webkit-text-stroke:0.1px currentColor;color:#d01818;position:absolute;left:899px;top:333px;width:36px;height:25px;line-height:25px;text-align:center;white-space:nowrap;">胜</div><div style="font:12px 'Liberation Sans', sans-serif;color:#222;-webkit-text-stroke:0.1px currentColor;color:#d01818;position:absolute;left:936px;top:333px;width:36px;height:25px;line-height:25px;text-align:center;white-space:nowrap;">赢</div><div style="font:12px 'Liberation Sans', sans-serif;color:#222;-webkit-text-stroke:0.1px currentColor;color:#1818b0;position:absolute;left:973px;top:333px;width:56px;height:25px;line-height:25px;text-align:center;white-space:nowrap;">小</div><div style="font:12px 'Liberation Sans', sans-serif;color:#222;letter-spacing:0.25px;position:absolute;left:3px;top:359px;width:1026px;height:25px;line-height:25px;text-align:center;white-space:nowrap;">近<span style="color:#d01818">10</span>场,胜5平1负4, 胜率:<span style="color:#d01818">50%</span> 让胜率:<span style="color:#d01818">40%</span> 大率:<span style="color:#d01818">40%</span> 单率:<span style="color:#d01818">50%</span></div><div style="position:absolute;left:2px;top:384px;width:1028px;height:25px;background:#dce3ec;"></div><div style="position:absolute;left:22px;top:392px;white-space:nowrap;font:bold 12px 'Liberation Sans', sans-serif;color:#222;line-height:14px">佛罗伦萨</div><div style="position:absolute;left:430px;top:392px;white-space:nowrap;font:12px 'Liberation Sans', sans-serif;color:#333;line-height:14px;">近</div><div style="position:absolute;left:445px;top:390px;width:38px;height:17px;box-sizing:border-box;border:1px solid #6e6e6e;border-radius:1px;background:#fff;"><span style="position:absolute;left:6px;top:1px;line-height:15px;font:14px 'Liberation Serif', serif;color:#000;white-space:nowrap"><span style="display:inline-block;transform:scaleX(0.8);transform-origin:0 0;letter-spacing:0.8px">10</span></span><svg style="position:absolute;left:22px;top:4px" width="10" height="6" viewBox="0 0 10 6"><path d="M1.2 1 L5.0 4.7 L8.8 1" fill="none" stroke="#000" stroke-width="2.2"/></svg></div><div style="position:absolute;left:487px;top:392px;white-space:nowrap;font:12px 'Liberation Sans', sans-serif;color:#333;line-height:14px;">场</div><div style="position:absolute;left:503px;top:390px;width:13px;height:13px;box-sizing:border-box;border:1px solid #767676;border-radius:2px;background:#fff;"></div><div style="position:absolute;left:520px;top:392px;white-space:nowrap;font:12px 'Liberation Sans', sans-serif;color:#333;line-height:14px;">同客</div><div style="position:absolute;left:547px;top:390px;width:13px;height:13px;"><svg width="13" height="13" viewBox="0 0 13 13" style="position:absolute;left:0;top:0"><rect x="0" y="0" width="13" height="13" rx="2" fill="#0075ff"/><path d="M2.8 6.6 L5.3 9.1 L10.3 3.6" fill="none" stroke="#fff" stroke-width="2"/></svg></div><div style="position:absolute;left:560px;top:392px;white-space:nowrap;font:12px 'Liberation Sans', sans-serif;color:#333;line-height:14px;">意甲</div><div style="position:absolute;left:584px;top:390px;width:13px;height:13px;"><svg width="13" height="13" viewBox="0 0 13 13" style="position:absolute;left:0;top:0"><rect x="0" y="0" width="13" height="13" rx="2" fill="#0075ff"/><path d="M2.8 6.6 L5.3 9.1 L10.3 3.6" fill="none" stroke="#fff" stroke-width="2"/></svg></div><div style="position:absolute;left:597px;top:392px;white-space:nowrap;font:12px 'Liberation Sans', sans-serif;color:#333;line-height:14px;">欧会杯</div><div style="position:absolute;left:633px;top:390px;width:13px;height:13px;"><svg width="13" height="13" viewBox="0 0 13 13" style="position:absolute;left:0;top:0"><rect x="0" y="0" width="13" height="13" rx="2" fill="#0075ff"/><path d="M2.8 6.6 L5.3 9.1 L10.3 3.6" fill="none" stroke="#fff" stroke-width="2"/></svg></div><div style="position:absolute;left:646px;top:392px;white-space:nowrap;font:12px 'Liberation Sans', sans-serif;color:#333;line-height:14px;">意杯</div><div style="position:absolute;left:2px;top:409px;width:1028px;height:39px;background:#dce3ec;"></div><div style="position:absolute;left:2px;top:448px;width:1028px;height:26px;background:#ffffff;"></div><div style="position:absolute;left:467px;top:448px;width:200px;height:26px;background:#fdf9f5;"></div><div style="position:absolute;left:667px;top:448px;width:216px;height:26px;background:#f1f8fc;"></div><div style="position:absolute;left:2px;top:448px;width:81px;height:26px;background:#0080ff;"></div><div style="position:absolute;left:2px;top:474px;width:1028px;height:26px;background:#efefef;"></div><div style="position:absolute;left:467px;top:474px;width:200px;height:26px;background:#fdf9f5;"></div><div style="position:absolute;left:667px;top:474px;width:216px;height:26px;background:#f1f8fc;"></div><div style="position:absolute;left:2px;top:474px;width:81px;height:26px;background:#0080ff;"></div><div style="position:absolute;left:2px;top:500px;width:1028px;height:26px;background:#ffffff;"></div><div style="position:absolute;left:467px;top:500px;width:200px;height:26px;background:#fdf9f5;"></div><div style="position:absolute;left:667px;top:500px;width:216px;height:26px;background:#f1f8fc;"></div><div style="position:absolute;left:2px;top:500px;width:81px;height:26px;background:#0080ff;"></div><div style="position:absolute;left:2px;top:526px;width:1028px;height:26px;background:#efefef;"></div><div style="position:absolute;left:467px;top:526px;width:200px;height:26px;background:#fdf9f5;"></div><div style="position:absolute;left:667px;top:526px;width:216px;height:26px;background:#f1f8fc;"></div><div style="position:absolute;left:2px;top:526px;width:81px;height:26px;background:#0080ff;"></div><div style="position:absolute;left:2px;top:552px;width:1028px;height:26px;background:#ffffff;"></div><div style="position:absolute;left:467px;top:552px;width:200px;height:26px;background:#fdf9f5;"></div><div style="position:absolute;left:667px;top:552px;width:216px;height:26px;background:#f1f8fc;"></div><div style="position:absolute;left:2px;top:552px;width:81px;height:26px;background:#0080ff;"></div><div style="position:absolute;left:2px;top:578px;width:1028px;height:26px;background:#efefef;"></div><div style="position:absolute;left:467px;top:578px;width:200px;height:26px;background:#fdf9f5;"></div><div style="position:absolute;left:667px;top:578px;width:216px;height:26px;background:#f1f8fc;"></div><div style="position:absolute;left:2px;top:578px;width:81px;height:26px;background:#0080ff;"></div><div style="position:absolute;left:2px;top:604px;width:1028px;height:26px;background:#ffffff;"></div><div style="position:absolute;left:467px;top:604px;width:200px;height:26px;background:#fdf9f5;"></div><div style="position:absolute;left:667px;top:604px;width:216px;height:26px;background:#f1f8fc;"></div><div style="position:absolute;left:2px;top:604px;width:81px;height:26px;background:#0080ff;"></div><div style="position:absolute;left:2px;top:630px;width:1028px;height:26px;background:#efefef;"></div><div style="position:absolute;left:467px;top:630px;width:200px;height:26px;background:#fdf9f5;"></div><div style="position:absolute;left:667px;top:630px;width:216px;height:26px;background:#f1f8fc;"></div><div style="position:absolute;left:2px;top:630px;width:81px;height:26px;background:#0080ff;"></div><div style="position:absolute;left:2px;top:656px;width:1028px;height:26px;background:#ffffff;"></div><div style="position:absolute;left:467px;top:656px;width:200px;height:26px;background:#fdf9f5;"></div><div style="position:absolute;left:667px;top:656px;width:216px;height:26px;background:#f1f8fc;"></div><div style="position:absolute;left:2px;top:656px;width:81px;height:26px;background:#0080ff;"></div><div style="position:absolute;left:2px;top:682px;width:1028px;height:26px;background:#efefef;"></div><div style="position:absolute;left:467px;top:682px;width:200px;height:26px;background:#fdf9f5;"></div><div style="position:absolute;left:667px;top:682px;width:216px;height:26px;background:#f1f8fc;"></div><div style="position:absolute;left:2px;top:682px;width:81px;height:26px;background:#0080ff;"></div><div style="position:absolute;left:2px;top:708px;width:1028px;height:26px;background:#fff;"></div><div style="position:absolute;left:2px;top:409px;width:1028px;height:1px;background:#c0c0c0;"></div><div style="position:absolute;left:2px;top:448px;width:1028px;height:1px;background:#c0c0c0;"></div><div style="position:absolute;left:467px;top:429px;width:563px;height:1px;background:#c0c0c0;"></div><div style="position:absolute;left:2px;top:474px;width:1028px;height:1px;background:#c0c0c0;"></div><div style="position:absolute;left:2px;top:500px;width:1028px;height:1px;background:#c0c0c0;"></div><div style="position:absolute;left:2px;top:526px;width:1028px;height:1px;background:#c0c0c0;"></div><div style="position:absolute;left:2px;top:552px;width:1028px;height:1px;background:#c0c0c0;"></div><div style="position:absolute;left:2px;top:578px;width:1028px;height:1px;background:#c0c0c0;"></div><div style="position:absolute;left:2px;top:604px;width:1028px;height:1px;background:#c0c0c0;"></div><div style="position:absolute;left:2px;top:630px;width:1028px;height:1px;background:#c0c0c0;"></div><div style="position:absolute;left:2px;top:656px;width:1028px;height:1px;background:#c0c0c0;"></div><div style="position:absolute;left:2px;top:682px;width:1028px;height:1px;background:#c0c0c0;"></div><div style="position:absolute;left:2px;top:708px;width:1028px;height:1px;background:#c0c0c0;"></div><div style="position:absolute;left:2px;top:734px;width:1028px;height:1px;background:#c0c0c0;"></div><div style="position:absolute;left:2px;top:409px;width:1px;height:326px;background:#c0c0c0;"></div><div style="position:absolute;left:83px;top:409px;width:1px;height:300px;background:#c0c0c0;"></div><div style="position:absolute;left:165px;top:409px;width:1px;height:300px;background:#c0c0c0;"></div><div style="position:absolute;left:246px;top:409px;width:1px;height:300px;background:#c0c0c0;"></div><div style="position:absolute;left:344px;top:409px;width:1px;height:300px;background:#c0c0c0;"></div><div style="position:absolute;left:386px;top:409px;width:1px;height:300px;background:#c0c0c0;"></div><div style="position:absolute;left:467px;top:409px;width:1px;height:300px;background:#c0c0c0;"></div><div style="position:absolute;left:520px;top:429px;width:1px;height:280px;background:#c0c0c0;"></div><div style="position:absolute;left:611px;top:429px;width:1px;height:280px;background:#c0c0c0;"></div><div style="position:absolute;left:667px;top:409px;width:1px;height:300px;background:#c0c0c0;"></div><div style="position:absolute;left:738px;top:429px;width:1px;height:280px;background:#c0c0c0;"></div><div style="position:absolute;left:810px;top:429px;width:1px;height:280px;background:#c0c0c0;"></div><div style="position:absolute;left:883px;top:409px;width:1px;height:300px;background:#c0c0c0;"></div><div style="position:absolute;left:924px;top:429px;width:1px;height:280px;background:#c0c0c0;"></div><div style="position:absolute;left:966px;top:429px;width:1px;height:280px;background:#c0c0c0;"></div><div style="position:absolute;left:1029px;top:409px;width:1px;height:326px;background:#c0c0c0;"></div><div style="position:absolute;left:3px;top:474px;width:80px;height:1px;background:#7fbfff;"></div><div style="position:absolute;left:3px;top:500px;width:80px;height:1px;background:#7fbfff;"></div><div style="position:absolute;left:3px;top:526px;width:80px;height:1px;background:#7fbfff;"></div><div style="position:absolute;left:3px;top:552px;width:80px;height:1px;background:#7fbfff;"></div><div style="position:absolute;left:3px;top:578px;width:80px;height:1px;background:#7fbfff;"></div><div style="position:absolute;left:3px;top:604px;width:80px;height:1px;background:#7fbfff;"></div><div style="position:absolute;left:3px;top:630px;width:80px;height:1px;background:#7fbfff;"></div><div style="position:absolute;left:3px;top:656px;width:80px;height:1px;background:#7fbfff;"></div><div style="position:absolute;left:3px;top:682px;width:80px;height:1px;background:#7fbfff;"></div><div style="position:absolute;left:83px;top:449px;width:1px;height:25px;background:#ffffff;"></div><div style="position:absolute;left:83px;top:475px;width:1px;height:25px;background:#efefef;"></div><div style="position:absolute;left:83px;top:501px;width:1px;height:25px;background:#ffffff;"></div><div style="position:absolute;left:83px;top:527px;width:1px;height:25px;background:#efefef;"></div><div style="position:absolute;left:83px;top:553px;width:1px;height:25px;background:#ffffff;"></div><div style="position:absolute;left:83px;top:579px;width:1px;height:25px;background:#efefef;"></div><div style="position:absolute;left:83px;top:605px;width:1px;height:25px;background:#ffffff;"></div><div style="position:absolute;left:83px;top:631px;width:1px;height:25px;background:#efefef;"></div><div style="position:absolute;left:83px;top:657px;width:1px;height:25px;background:#ffffff;"></div><div style="position:absolute;left:83px;top:683px;width:1px;height:25px;background:#efefef;"></div><div style="font:12px 'Liberation Sans', sans-serif;color:#222;color:#333;position:absolute;left:3px;top:411px;width:80px;height:38px;line-height:38px;text-align:center;white-space:nowrap;">类型</div><div style="font:12px 'Liberation Sans', sans-serif;color:#222;color:#333;position:absolute;left:84px;top:411px;width:81px;height:38px;line-height:38px;text-align:center;white-space:nowrap;">日期</div><div style="font:12px 'Liberation Sans', sans-serif;color:#222;color:#333;position:absolute;left:166px;top:411px;width:80px;height:38px;line-height:38px;text-align:center;white-space:nowrap;">主场</div><div style="font:12px 'Liberation Sans', sans-serif;color:#222;color:#333;position:absolute;left:247px;top:411px;width:97px;height:38px;line-height:38px;text-align:center;white-space:nowrap;">比分(半场)</div><div style="font:12px 'Liberation Sans', sans-serif;color:#222;color:#333;position:absolute;left:345px;top:411px;width:41px;height:38px;line-height:38px;text-align:center;white-space:nowrap;">角球</div><div style="font:12px 'Liberation Sans', sans-serif;color:#222;color:#333;position:absolute;left:387px;top:411px;width:80px;height:38px;line-height:38px;text-align:center;white-space:nowrap;">客场</div><div style="font:12px 'Liberation Sans', sans-serif;color:#222;color:#333;position:absolute;left:468px;top:431px;width:52px;height:18px;line-height:18px;text-align:center;white-space:nowrap;">主</div><div style="font:12px 'Liberation Sans', sans-serif;color:#222;color:#333;position:absolute;left:521px;top:431px;width:90px;height:18px;line-height:18px;text-align:center;white-space:nowrap;">让球</div><div style="font:12px 'Liberation Sans', sans-serif;color:#222;color:#333;position:absolute;left:612px;top:431px;width:55px;height:18px;line-height:18px;text-align:center;white-space:nowrap;">客</div><div style="font:12px 'Liberation Sans', sans-serif;color:#222;color:#333;position:absolute;left:668px;top:431px;width:70px;height:18px;line-height:18px;text-align:center;white-space:nowrap;">主</div><div style="font:12px 'Liberation Sans', sans-serif;color:#222;color:#333;position:absolute;left:739px;top:431px;width:71px;height:18px;line-height:18px;text-align:center;white-space:nowrap;">和</div><div style="font:12px 'Liberation Sans', sans-serif;color:#222;color:#333;position:absolute;left:811px;top:431px;width:72px;height:18px;line-height:18px;text-align:center;white-space:nowrap;">客</div><div style="font:12px 'Liberation Sans', sans-serif;color:#222;color:#333;position:absolute;left:884px;top:431px;width:40px;height:18px;line-height:18px;text-align:center;white-space:nowrap;">胜负</div><div style="font:12px 'Liberation Sans', sans-serif;color:#222;color:#333;position:absolute;left:925px;top:431px;width:41px;height:18px;line-height:18px;text-align:center;white-space:nowrap;">让球</div><div style="font:12px 'Liberation Sans', sans-serif;color:#222;color:#333;position:absolute;left:967px;top:431px;width:62px;height:18px;line-height:18px;text-align:center;white-space:nowrap;">进球数</div><div style="position:absolute;left:507px;top:410px;width:61px;height:19px;box-sizing:border-box;border:1px solid #6e6e6e;border-radius:1px;background:#fff;"><span style="position:absolute;left:4px;top:1px;line-height:17px;font:13px 'Liberation Sans', sans-serif;color:#000;white-space:nowrap">Crow*</span><svg style="position:absolute;left:45px;top:5px" width="10" height="6" viewBox="0 0 10 6"><path d="M1.2 1 L5.0 4.7 L8.8 1" fill="none" stroke="#000" stroke-width="2.2"/></svg></div><div style="position:absolute;left:576px;top:410px;width:51px;height:19px;box-sizing:border-box;border:1px solid #6e6e6e;border-radius:1px;background:#fff;"><span style="position:absolute;left:4px;top:1px;line-height:17px;font:13px 'Liberation Sans', sans-serif;color:#000;white-space:nowrap">终指</span><svg style="position:absolute;left:35px;top:5px" width="10" height="6" viewBox="0 0 10 6"><path d="M1.2 1 L5.0 4.7 L8.8 1" fill="none" stroke="#000" stroke-width="2.2"/></svg></div><div style="position:absolute;left:711px;top:410px;width:70px;height:19px;box-sizing:border-box;border:1px solid #6e6e6e;border-radius:1px;background:#fff;"><span style="position:absolute;left:4px;top:1px;line-height:17px;font:13px 'Liberation Sans', sans-serif;color:#000;white-space:nowrap">平均值</span><svg style="position:absolute;left:54px;top:5px" width="10" height="6" viewBox="0 0 10 6"><path d="M1.2 1 L5.0 4.7 L8.8 1" fill="none" stroke="#000" stroke-width="2.2"/></svg></div><div style="position:absolute;left:788px;top:410px;width:51px;height:19px;box-sizing:border-box;border:1px solid #6e6e6e;border-radius:1px;background:#fff;"><span style="position:absolute;left:4px;top:1px;line-height:17px;font:13px 'Liberation Sans', sans-serif;color:#000;white-space:nowrap">终指</span><svg style="position:absolute;left:35px;top:5px" width="10" height="6" viewBox="0 0 10 6"><path d="M1.2 1 L5.0 4.7 L8.8 1" fill="none" stroke="#000" stroke-width="2.2"/></svg></div><div style="position:absolute;left:931px;top:410px;width:51px;height:19px;box-sizing:border-box;border:1px solid #6e6e6e;border-radius:1px;background:#fff;"><span style="position:absolute;left:4px;top:1px;line-height:17px;font:13px 'Liberation Sans', sans-serif;color:#000;white-space:nowrap">全场</span><svg style="position:absolute;left:35px;top:5px" width="10" height="6" viewBox="0 0 10 6"><path d="M1.2 1 L5.0 4.7 L8.8 1" fill="none" stroke="#000" stroke-width="2.2"/></svg></div><div style="font:12px 'Liberation Sans', sans-serif;color:#fff;-webkit-text-stroke:0.2px #fff;position:absolute;left:3px;top:450px;width:80px;height:25px;line-height:25px;text-align:center;white-space:nowrap;">意甲</div><div style="font:12px 'Liberation Sans', sans-serif;color:#222;position:absolute;left:84px;top:450px;width:81px;height:25px;line-height:25px;text-align:center;white-space:nowrap;">25-03-01</div><div style="font:12px 'Liberation Sans', sans-serif;color:#222;-webkit-text-stroke:0.1px currentColor;color:#107010;position:absolute;left:166px;top:450px;width:80px;height:25px;line-height:25px;text-align:center;white-space:nowrap;">佛罗伦萨</div><div style="font:12px 'Liberation Sans', sans-serif;color:#222;position:absolute;left:247px;top:450px;width:97px;height:25px;line-height:25px;text-align:center;white-space:nowrap;"><span style="color:#d01818">1-0</span>(1-0)</div><div style="font:12px 'Liberation Sans', sans-serif;color:#222;position:absolute;left:345px;top:450px;width:41px;height:25px;line-height:25px;text-align:center;white-space:nowrap;">5-2</div><div style="font:12px 'Liberation Sans', sans-serif;color:#222;-webkit-text-stroke:0.1px currentColor;position:absolute;left:387px;top:450px;width:80px;height:25px;line-height:25px;text-align:center;white-space:nowrap;">莱切</div><div style="font:12px 'Liberation Sans', sans-serif;color:#222;position:absolute;left:468px;top:450px;width:52px;height:25px;line-height:25px;text-align:center;white-space:nowrap;">0.96</div><div style="font:12px 'Liberation Sans', sans-serif;color:#222;-webkit-text-stroke:0.1px currentColor;position:absolute;left:521px;top:450px;width:90px;height:25px;line-height:25px;text-align:center;white-space:nowrap;">半球</div><div style="font:12px 'Liberation Sans', sans-serif;color:#222;position:absolute;left:612px;top:450px;width:55px;height:25px;line-height:25px;text-align:center;white-space:nowrap;">0.93</div><div style="font:12px 'Liberation Sans', sans-serif;color:#222;position:absolute;left:668px;top:450px;width:70px;height:25px;line-height:25px;text-align:center;white-space:nowrap;">1.79</div><div style="font:12px 'Liberation Sans', sans-serif;color:#222;position:absolute;left:739px;top:450px;width:71px;height:25px;line-height:25px;text-align:center;white-space:nowrap;">3.47</div><div style="font:12px 'Liberation Sans', sans-serif;color:#222;position:absolute;left:811px;top:450px;width:72px;height:25px;line-height:25px;text-align:center;white-space:nowrap;">4.92</div><div style="font:12px 'Liberation Sans', sans-serif;color:#222;-webkit-text-stroke:0.1px currentColor;color:#d01818;position:absolute;left:884px;top:450px;width:40px;height:25px;line-height:25px;text-align:center;white-space:nowrap;">胜</div><div style="font:12px 'Liberation Sans', sans-serif;color:#222;-webkit-text-stroke:0.1px currentColor;color:#d01818;position:absolute;left:925px;top:450px;width:41px;height:25px;line-height:25px;text-align:center;white-space:nowrap;">赢</div><div style="font:12px 'Liberation Sans', sans-serif;color:#222;-webkit-text-stroke:0.1px currentColor;color:#1818b0;position:absolute;left:967px;top:450px;width:62px;height:25px;line-height:25px;text-align:center;white-space:nowrap;">小</div><div style="font:12px 'Liberation Sans', sans-serif;color:#fff;-webkit-text-stroke:0.2px #fff;position:absolute;left:3px;top:476px;width:80px;height:25px;line-height:25px;text-align:center;white-space:nowrap;">意甲</div><div style="font:12px 'Liberation Sans', sans-serif;color:#222;position:absolute;left:84px;top:476px;width:81px;height:25px;line-height:25px;text-align:center;white-space:nowrap;">25-02-23</div><div style="font:12px 'Liberation Sans', sans-serif;color:#222;-webkit-text-stroke:0.1px currentColor;position:absolute;left:166px;top:476px;width:80px;height:25px;line-height:25px;text-align:center;white-space:nowrap;">维罗纳</div><div style="font:12px 'Liberation Sans', sans-serif;color:#222;position:absolute;left:247px;top:476px;width:97px;height:25px;line-height:25px;text-align:center;white-space:nowrap;"><span style="color:#d01818">1-0</span>(0-0)</div><div style="font:12px 'Liberation Sans', sans-serif;color:#222;position:absolute;left:345px;top:476px;width:41px;height:25px;line-height:25px;text-align:center;white-space:nowrap;">4-1</div><div style="font:12px 'Liberation Sans', sans-serif;color:#222;-webkit-text-stroke:0.1px currentColor;color:#107010;position:absolute;left:387px;top:476px;width:80px;height:25px;line-height:25px;text-align:center;white-space:nowrap;">佛罗伦萨</div><div style="font:12px 'Liberation Sans', sans-serif;color:#222;position:absolute;left:468px;top:476px;width:52px;height:25px;line-height:25px;text-align:center;white-space:nowrap;">0.77</div><div style="font:12px 'Liberation Sans', sans-serif;color:#222;-webkit-text-stroke:0.1px currentColor;position:absolute;left:521px;top:476px;width:90px;height:25px;line-height:25px;text-align:center;white-space:nowrap;">受半球</div><div style="font:12px 'Liberation Sans', sans-serif;color:#222;position:absolute;left:612px;top:476px;width:55px;height:25px;line-height:25px;text-align:center;white-space:nowrap;">1.13</div><div style="font:12px 'Liberation Sans', sans-serif;color:#222;position:absolute;left:668px;top:476px;width:70px;height:25px;line-height:25px;text-align:center;white-space:nowrap;">3.77</div><div style="font:12px 'Liberation Sans', sans-serif;color:#222;position:absolute;left:739px;top:476px;width:71px;height:25px;line-height:25px;text-align:center;white-space:nowrap;">3.33</div><div style="font:12px 'Liberation Sans', sans-serif;color:#222;position:absolute;left:811px;top:476px;width:72px;height:25px;line-height:25px;text-align:center;white-space:nowrap;">2.05</div><div style="font:12px 'Liberation Sans', sans-serif;color:#222;-webkit-text-stroke:0.1px currentColor;color:#1818b0;position:absolute;left:884px;top:476px;width:40px;height:25px;line-height:25px;text-align:center;white-space:nowrap;">负</div><div style="font:12px 'Liberation Sans', sans-serif;color:#222;-webkit-text-stroke:0.1px currentColor;color:#1818b0;position:absolute;left:925px;top:476px;width:41px;height:25px;line-height:25px;text-align:center;white-space:nowrap;">输</div><div style="font:12px 'Liberation Sans', sans-serif;color:#222;-webkit-text-stroke:0.1px currentColor;color:#1818b0;position:absolute;left:967px;top:476px;width:62px;height:25px;line-height:25px;text-align:center;white-space:nowrap;">小</div><div style="font:12px 'Liberation Sans', sans-serif;color:#fff;-webkit-text-stroke:0.2px #fff;position:absolute;left:3px;top:502px;width:80px;height:25px;line-height:25px;text-align:center;white-space:nowrap;">意甲</div><div style="font:12px 'Liberation Sans', sans-serif;color:#222;position:absolute;left:84px;top:502px;width:81px;height:25px;line-height:25px;text-align:center;white-space:nowrap;">25-02-16</div><div style="font:12px 'Liberation Sans', sans-serif;color:#222;-webkit-text-stroke:0.1px currentColor;color:#107010;position:absolute;left:166px;top:502px;width:80px;height:25px;line-height:25px;text-align:center;white-space:nowrap;">佛罗伦萨</div><div style="font:12px 'Liberation Sans', sans-serif;color:#222;position:absolute;left:247px;top:502px;width:97px;height:25px;line-height:25px;text-align:center;white-space:nowrap;"><span style="color:#d01818">0-2</span>(0-1)</div><div style="font:12px 'Liberation Sans', sans-serif;color:#222;position:absolute;left:345px;top:502px;width:41px;height:25px;line-height:25px;text-align:center;white-space:nowrap;">2-1</div><div style="font:12px 'Liberation Sans', sans-serif;color:#222;-webkit-text-stroke:0.1px currentColor;position:absolute;left:387px;top:502px;width:80px;height:25px;line-height:25px;text-align:center;white-space:nowrap;">科莫</div><div style="font:12px 'Liberation Sans', sans-serif;color:#222;position:absolute;left:468px;top:502px;width:52px;height:25px;line-height:25px;text-align:center;white-space:nowrap;">1.08</div><div style="font:12px 'Liberation Sans', sans-serif;color:#222;-webkit-text-stroke:0.1px currentColor;position:absolute;left:521px;top:502px;width:90px;height:25px;line-height:25px;text-align:center;white-space:nowrap;">平/半</div><div style="font:12px 'Liberation Sans', sans-serif;color:#222;position:absolute;left:612px;top:502px;width:55px;height:25px;line-height:25px;text-align:center;white-space:nowrap;">0.81</div><div style="font:12px 'Liberation Sans', sans-serif;color:#222;position:absolute;left:668px;top:502px;width:70px;height:25px;line-height:25px;text-align:center;white-space:nowrap;">2.31</div><div style="font:12px 'Liberation Sans', sans-serif;color:#222;position:absolute;left:739px;top:502px;width:71px;height:25px;line-height:25px;text-align:center;white-space:nowrap;">3.20</div><div style="font:12px 'Liberation Sans', sans-serif;color:#222;position:absolute;left:811px;top:502px;width:72px;height:25px;line-height:25px;text-align:center;white-space:nowrap;">3.26</div><div style="font:12px 'Liberation Sans', sans-serif;color:#222;-webkit-text-stroke:0.1px currentColor;color:#1818b0;position:absolute;left:884px;top:502px;width:40px;height:25px;line-height:25px;text-align:center;white-space:nowrap;">负</div><div style="font:12px 'Liberation Sans', sans-serif;color:#222;-webkit-text-stroke:0.1px currentColor;color:#1818b0;position:absolute;left:925px;top:502px;width:41px;height:25px;line-height:25px;text-align:center;white-space:nowrap;">输</div><div style="font:12px 'Liberation Sans', sans-serif;color:#222;-webkit-text-stroke:0.1px currentColor;color:#1818b0;position:absolute;left:967px;top:502px;width:62px;height:25px;line-height:25px;text-align:center;white-space:nowrap;">小</div><div style="font:12px 'Liberation Sans', sans-serif;color:#fff;-webkit-text-stroke:0.2px #fff;position:absolute;left:3px;top:528px;width:80px;height:25px;line-height:25px;text-align:center;white-space:nowrap;">意甲</div><div style="font:12px 'Liberation Sans', sans-serif;color:#222;position:absolute;left:84px;top:528px;width:81px;height:25px;line-height:25px;text-align:center;white-space:nowrap;">25-02-11</div><div style="font:12px 'Liberation Sans', sans-serif;color:#222;-webkit-text-stroke:0.1px currentColor;position:absolute;left:166px;top:528px;width:80px;height:25px;line-height:25px;text-align:center;white-space:nowrap;">国际米兰</div><div style="font:12px 'Liberation Sans', sans-serif;color:#222;position:absolute;left:247px;top:528px;width:97px;height:25px;line-height:25px;text-align:center;white-space:nowrap;"><span style="color:#d01818">2-1</span>(1-1)</div><div style="font:12px 'Liberation Sans', sans-serif;color:#222;position:absolute;left:345px;top:528px;width:41px;height:25px;line-height:25px;text-align:center;white-space:nowrap;">8-1</div><div style="font:12px 'Liberation Sans', sans-serif;color:#222;-webkit-text-stroke:0.1px currentColor;color:#107010;position:absolute;left:387px;top:528px;width:80px;height:25px;line-height:25px;text-align:center;white-space:nowrap;">佛罗伦萨</div><div style="font:12px 'Liberation Sans', sans-serif;color:#222;position:absolute;left:468px;top:528px;width:52px;height:25px;line-height:25px;text-align:center;white-space:nowrap;">1.06</div><div style="font:12px 'Liberation Sans', sans-serif;color:#222;-webkit-text-stroke:0.1px currentColor;position:absolute;left:521px;top:528px;width:90px;height:25px;line-height:25px;text-align:center;white-space:nowrap;">一/球半</div><div style="font:12px 'Liberation Sans', sans-serif;color:#222;position:absolute;left:612px;top:528px;width:55px;height:25px;line-height:25px;text-align:center;white-space:nowrap;">0.83</div><div style="font:12px 'Liberation Sans', sans-serif;color:#222;position:absolute;left:668px;top:528px;width:70px;height:25px;line-height:25px;text-align:center;white-space:nowrap;">1.46</div><div style="font:12px 'Liberation Sans', sans-serif;color:#222;position:absolute;left:739px;top:528px;width:71px;height:25px;line-height:25px;text-align:center;white-space:nowrap;">4.54</div><div style="font:12px 'Liberation Sans', sans-serif;color:#222;position:absolute;left:811px;top:528px;width:72px;height:25px;line-height:25px;text-align:center;white-space:nowrap;">6.64</div><div style="font:12px 'Liberation Sans', sans-serif;color:#222;-webkit-text-stroke:0.1px currentColor;color:#1818b0;position:absolute;left:884px;top:528px;width:40px;height:25px;line-height:25px;text-align:center;white-space:nowrap;">负</div><div style="font:12px 'Liberation Sans', sans-serif;color:#222;-webkit-text-stroke:0.1px currentColor;color:#d01818;position:absolute;left:925px;top:528px;width:41px;height:25px;line-height:25px;text-align:center;white-space:nowrap;">赢</div><div style="font:12px 'Liberation Sans', sans-serif;color:#222;-webkit-text-stroke:0.1px currentColor;color:#d01818;position:absolute;left:967px;top:528px;width:62px;height:25px;line-height:25px;text-align:center;white-space:nowrap;">大</div><div style="font:12px 'Liberation Sans', sans-serif;color:#fff;-webkit-text-stroke:0.2px #fff;position:absolute;left:3px;top:554px;width:80px;height:25px;line-height:25px;text-align:center;white-space:nowrap;">意甲</div><div style="font:12px 'Liberation Sans', sans-serif;color:#222;position:absolute;left:84px;top:554px;width:81px;height:25px;line-height:25px;text-align:center;white-space:nowrap;">25-02-07</div><div style="font:12px 'Liberation Sans', sans-serif;color:#222;-webkit-text-stroke:0.1px currentColor;color:#107010;position:absolute;left:166px;top:554px;width:80px;height:25px;line-height:25px;text-align:center;white-space:nowrap;">佛罗伦萨</div><div style="font:12px 'Liberation Sans', sans-serif;color:#222;position:absolute;left:247px;top:554px;width:97px;height:25px;line-height:25px;text-align:center;white-space:nowrap;"><span style="color:#d01818">3-0</span>(0-0)</div><div style="font:12px 'Liberation Sans', sans-serif;color:#222;position:absolute;left:345px;top:554px;width:41px;height:25px;line-height:25px;text-align:center;white-space:nowrap;">1-8</div><div style="font:12px 'Liberation Sans', sans-serif;color:#222;-webkit-text-stroke:0.1px currentColor;position:absolute;left:387px;top:554px;width:80px;height:25px;line-height:25px;text-align:center;white-space:nowrap;">国际米兰</div><div style="font:12px 'Liberation Sans', sans-serif;color:#222;position:absolute;left:468px;top:554px;width:52px;height:25px;line-height:25px;text-align:center;white-space:nowrap;">0.84</div><div style="font:12px 'Liberation Sans', sans-serif;color:#222;-webkit-text-stroke:0.1px currentColor;position:absolute;left:521px;top:554px;width:90px;height:25px;line-height:25px;text-align:center;white-space:nowrap;">受半/一</div><div style="font:12px 'Liberation Sans', sans-serif;color:#222;position:absolute;left:612px;top:554px;width:55px;height:25px;line-height:25px;text-align:center;white-space:nowrap;">1.05</div><div style="font:12px 'Liberation Sans', sans-serif;color:#222;position:absolute;left:668px;top:554px;width:70px;height:25px;line-height:25px;text-align:center;white-space:nowrap;">4.55</div><div style="font:12px 'Liberation Sans', sans-serif;color:#222;position:absolute;left:739px;top:554px;width:71px;height:25px;line-height:25px;text-align:center;white-space:nowrap;">3.52</div><div style="font:12px 'Liberation Sans', sans-serif;color:#222;position:absolute;left:811px;top:554px;width:72px;height:25px;line-height:25px;text-align:center;white-space:nowrap;">1.84</div><div style="font:12px 'Liberation Sans', sans-serif;color:#222;-webkit-text-stroke:0.1px currentColor;color:#d01818;position:absolute;left:884px;top:554px;width:40px;height:25px;line-height:25px;text-align:center;white-space:nowrap;">胜</div><div style="font:12px 'Liberation Sans', sans-serif;color:#222;-webkit-text-stroke:0.1px currentColor;color:#d01818;position:absolute;left:925px;top:554px;width:41px;height:25px;line-height:25px;text-align:center;white-space:nowrap;">赢</div><div style="font:12px 'Liberation Sans', sans-serif;color:#222;-webkit-text-stroke:0.1px currentColor;color:#d01818;position:absolute;left:967px;top:554px;width:62px;height:25px;line-height:25px;text-align:center;white-space:nowrap;">大</div><div style="font:12px 'Liberation Sans', sans-serif;color:#fff;-webkit-text-stroke:0.2px #fff;position:absolute;left:3px;top:580px;width:80px;height:25px;line-height:25px;text-align:center;white-space:nowrap;">意甲</div><div style="font:12px 'Liberation Sans', sans-serif;color:#222;position:absolute;left:84px;top:580px;width:81px;height:25px;line-height:25px;text-align:center;white-space:nowrap;">25-02-02</div><div style="font:12px 'Liberation Sans', sans-serif;color:#222;-webkit-text-stroke:0.1px currentColor;color:#107010;position:absolute;left:166px;top:580px;width:80px;height:25px;line-height:25px;text-align:center;white-space:nowrap;">佛罗伦萨</div><div style="font:12px 'Liberation Sans', sans-serif;color:#222;position:absolute;left:247px;top:580px;width:97px;height:25px;line-height:25px;text-align:center;white-space:nowrap;"><span style="color:#d01818">2-1</span>(2-0)</div><div style="font:12px 'Liberation Sans', sans-serif;color:#222;position:absolute;left:345px;top:580px;width:41px;height:25px;line-height:25px;text-align:center;white-space:nowrap;">1-8</div><div style="font:12px 'Liberation Sans', sans-serif;color:#222;-webkit-text-stroke:0.1px currentColor;position:absolute;left:387px;top:580px;width:80px;height:25px;line-height:25px;text-align:center;white-space:nowrap;">热那亚</div><div style="font:12px 'Liberation Sans', sans-serif;color:#222;position:absolute;left:468px;top:580px;width:52px;height:25px;line-height:25px;text-align:center;white-space:nowrap;">0.94</div><div style="font:12px 'Liberation Sans', sans-serif;color:#222;-webkit-text-stroke:0.1px currentColor;position:absolute;left:521px;top:580px;width:90px;height:25px;line-height:25px;text-align:center;white-space:nowrap;">半球</div><div style="font:12px 'Liberation Sans', sans-serif;color:#222;position:absolute;left:612px;top:580px;width:55px;height:25px;line-height:25px;text-align:center;white-space:nowrap;">0.95</div><div style="font:12px 'Liberation Sans', sans-serif;color:#222;position:absolute;left:668px;top:580px;width:70px;height:25px;line-height:25px;text-align:center;white-space:nowrap;">1.83</div><div style="font:12px 'Liberation Sans', sans-serif;color:#222;position:absolute;left:739px;top:580px;width:71px;height:25px;line-height:25px;text-align:center;white-space:nowrap;">3.56</div><div style="font:12px 'Liberation Sans', sans-serif;color:#222;position:absolute;left:811px;top:580px;width:72px;height:25px;line-height:25px;text-align:center;white-space:nowrap;">4.47</div><div style="font:12px 'Liberation Sans', sans-serif;color:#222;-webkit-text-stroke:0.1px currentColor;color:#d01818;position:absolute;left:884px;top:580px;width:40px;height:25px;line-height:25px;text-align:center;white-space:nowrap;">胜</div><div style="font:12px 'Liberation Sans', sans-serif;color:#222;-webkit-text-stroke:0.1px currentColor;color:#d01818;position:absolute;left:925px;top:580px;width:41px;height:25px;line-height:25px;text-align:center;white-space:nowrap;">赢</div><div style="font:12px 'Liberation Sans', sans-serif;color:#222;-webkit-text-stroke:0.1px currentColor;color:#d01818;position:absolute;left:967px;top:580px;width:62px;height:25px;line-height:25px;text-align:center;white-space:nowrap;">大</div><div style="font:12px 'Liberation Sans', sans-serif;color:#fff;-webkit-text-stroke:0.2px #fff;position:absolute;left:3px;top:606px;width:80px;height:25px;line-height:25px;text-align:center;white-space:nowrap;">意甲</div><div style="font:12px 'Liberation Sans', sans-serif;color:#222;position:absolute;left:84px;top:606px;width:81px;height:25px;line-height:25px;text-align:center;white-space:nowrap;">25-01-27</div><div style="font:12px 'Liberation Sans', sans-serif;color:#222;-webkit-text-stroke:0.1px currentColor;position:absolute;left:166px;top:606px;width:80px;height:25px;line-height:25px;text-align:center;white-space:nowrap;">拉齐奥</div><div style="font:12px 'Liberation Sans', sans-serif;color:#222;position:absolute;left:247px;top:606px;width:97px;height:25px;line-height:25px;text-align:center;white-space:nowrap;"><span style="color:#d01818">1-2</span>(0-2)</div><div style="font:12px 'Liberation Sans', sans-serif;color:#222;position:absolute;left:345px;top:606px;width:41px;height:25px;line-height:25px;text-align:center;white-space:nowrap;">14-2</div><div style="font:12px 'Liberation Sans', sans-serif;color:#222;-webkit-text-stroke:0.1px currentColor;color:#107010;position:absolute;left:387px;top:606px;width:80px;height:25px;line-height:25px;text-align:center;white-space:nowrap;">佛罗伦萨</div><div style="font:12px 'Liberation Sans', sans-serif;color:#222;position:absolute;left:468px;top:606px;width:52px;height:25px;line-height:25px;text-align:center;white-space:nowrap;">0.87</div><div style="font:12px 'Liberation Sans', sans-serif;color:#222;-webkit-text-stroke:0.1px currentColor;position:absolute;left:521px;top:606px;width:90px;height:25px;line-height:25px;text-align:center;white-space:nowrap;">平/半</div><div style="font:12px 'Liberation Sans', sans-serif;color:#222;position:absolute;left:612px;top:606px;width:55px;height:25px;line-height:25px;text-align:center;white-space:nowrap;">1.02</div><div style="font:12px 'Liberation Sans', sans-serif;color:#222;position:absolute;left:668px;top:606px;width:70px;height:25px;line-height:25px;text-align:center;white-space:nowrap;">2.08</div><div style="font:12px 'Liberation Sans', sans-serif;color:#222;position:absolute;left:739px;top:606px;width:71px;height:25px;line-height:25px;text-align:center;white-space:nowrap;">3.39</div><div style="font:12px 'Liberation Sans', sans-serif;color:#222;position:absolute;left:811px;top:606px;width:72px;height:25px;line-height:25px;text-align:center;white-space:nowrap;">3.61</div><div style="font:12px 'Liberation Sans', sans-serif;color:#222;-webkit-text-stroke:0.1px currentColor;color:#d01818;position:absolute;left:884px;top:606px;width:40px;height:25px;line-height:25px;text-align:center;white-space:nowrap;">胜</div><div style="font:12px 'Liberation Sans', sans-serif;color:#222;-webkit-text-stroke:0.1px currentColor;color:#d01818;position:absolute;left:925px;top:606px;width:41px;height:25px;line-height:25px;text-align:center;white-space:nowrap;">赢</div><div style="font:12px 'Liberation Sans', sans-serif;color:#222;-webkit-text-stroke:0.1px currentColor;color:#d01818;position:absolute;left:967px;top:606px;width:62px;height:25px;line-height:25px;text-align:center;white-space:nowrap;">大</div><div style="font:12px 'Liberation Sans', sans-serif;color:#fff;-webkit-text-stroke:0.2px #fff;position:absolute;left:3px;top:632px;width:80px;height:25px;line-height:25px;text-align:center;white-space:nowrap;">意甲</div><div style="font:12px 'Liberation Sans', sans-serif;color:#222;position:absolute;left:84px;top:632px;width:81px;height:25px;line-height:25px;text-align:center;white-space:nowrap;">25-01-19</div><div style="font:12px 'Liberation Sans', sans-serif;color:#222;-webkit-text-stroke:0.1px currentColor;color:#107010;position:absolute;left:166px;top:632px;width:80px;height:25px;line-height:25px;text-align:center;white-space:nowrap;">佛罗伦萨</div><div style="font:12px 'Liberation Sans', sans-serif;color:#222;position:absolute;left:247px;top:632px;width:97px;height:25px;line-height:25px;text-align:center;white-space:nowrap;"><span style="color:#d01818">1-1</span>(1-0)</div><div style="font:12px 'Liberation Sans', sans-serif;color:#222;position:absolute;left:345px;top:632px;width:41px;height:25px;line-height:25px;text-align:center;white-space:nowrap;">9-2</div><div style="font:12px 'Liberation Sans', sans-serif;color:#222;-webkit-text-stroke:0.1px currentColor;position:absolute;left:387px;top:632px;width:80px;height:25px;line-height:25px;text-align:center;white-space:nowrap;">都灵<span style="display:inline-block;width:7px;height:15px;background:#e00000;color:#fff;font-weight:bold;font-size:12px;line-height:15px;text-align:center;vertical-align:1px">1</span></div><div style="font:12px 'Liberation Sans', sans-serif;color:#222;position:absolute;left:468px;top:632px;width:52px;height:25px;line-height:25px;text-align:center;white-space:nowrap;">1.04</div><div style="font:12px 'Liberation Sans', sans-serif;color:#222;-webkit-text-stroke:0.1px currentColor;position:absolute;left:521px;top:632px;width:90px;height:25px;line-height:25px;text-align:center;white-space:nowrap;">半/一</div><div style="font:12px 'Liberation Sans', sans-serif;color:#222;position:absolute;left:612px;top:632px;width:55px;height:25px;line-height:25px;text-align:center;white-space:nowrap;">0.85</div><div style="font:12px 'Liberation Sans', sans-serif;color:#222;position:absolute;left:668px;top:632px;width:70px;height:25px;line-height:25px;text-align:center;white-space:nowrap;">1.75</div><div style="font:12px 'Liberation Sans', sans-serif;color:#222;position:absolute;left:739px;top:632px;width:71px;height:25px;line-height:25px;text-align:center;white-space:nowrap;">3.51</div><div style="font:12px 'Liberation Sans', sans-serif;color:#222;position:absolute;left:811px;top:632px;width:72px;height:25px;line-height:25px;text-align:center;white-space:nowrap;">5.02</div><div style="font:12px 'Liberation Sans', sans-serif;color:#222;-webkit-text-stroke:0.1px currentColor;color:#107010;position:absolute;left:884px;top:632px;width:40px;height:25px;line-height:25px;text-align:center;white-space:nowrap;">平</div><div style="font:12px 'Liberation Sans', sans-serif;color:#222;-webkit-text-stroke:0.1px currentColor;color:#1818b0;position:absolute;left:925px;top:632px;width:41px;height:25px;line-height:25px;text-align:center;white-space:nowrap;">输</div><div style="font:12px 'Liberation Sans', sans-serif;color:#222;-webkit-text-stroke:0.1px currentColor;color:#1818b0;position:absolute;left:967px;top:632px;width:62px;height:25px;line-height:25px;text-align:center;white-space:nowrap;">小</div><div style="font:12px 'Liberation Sans', sans-serif;color:#fff;-webkit-text-stroke:0.2px #fff;position:absolute;left:3px;top:658px;width:80px;height:25px;line-height:25px;text-align:center;white-space:nowrap;">意甲</div><div style="font:12px 'Liberation Sans', sans-serif;color:#222;position:absolute;left:84px;top:658px;width:81px;height:25px;line-height:25px;text-align:center;white-space:nowrap;">25-01-14</div><div style="font:12px 'Liberation Sans', sans-serif;color:#222;-webkit-text-stroke:0.1px currentColor;position:absolute;left:166px;top:658px;width:80px;height:25px;line-height:25px;text-align:center;white-space:nowrap;">蒙扎</div><div style="font:12px 'Liberation Sans', sans-serif;color:#222;position:absolute;left:247px;top:658px;width:97px;height:25px;line-height:25px;text-align:center;white-space:nowrap;"><span style="color:#d01818">2-1</span>(1-0)</div><div style="font:12px 'Liberation Sans', sans-serif;color:#222;position:absolute;left:345px;top:658px;width:41px;height:25px;line-height:25px;text-align:center;white-space:nowrap;">2-4</div><div style="font:12px 'Liberation Sans', sans-serif;color:#222;-webkit-text-stroke:0.1px currentColor;color:#107010;position:absolute;left:387px;top:658px;width:80px;height:25px;line-height:25px;text-align:center;white-space:nowrap;">佛罗伦萨</div><div style="font:12px 'Liberation Sans', sans-serif;color:#222;position:absolute;left:468px;top:658px;width:52px;height:25px;line-height:25px;text-align:center;white-space:nowrap;">0.94</div><div style="font:12px 'Liberation Sans', sans-serif;color:#222;-webkit-text-stroke:0.1px currentColor;position:absolute;left:521px;top:658px;width:90px;height:25px;line-height:25px;text-align:center;white-space:nowrap;">受半球</div><div style="font:12px 'Liberation Sans', sans-serif;color:#222;position:absolute;left:612px;top:658px;width:55px;height:25px;line-height:25px;text-align:center;white-space:nowrap;">0.95</div><div style="font:12px 'Liberation Sans', sans-serif;color:#222;position:absolute;left:668px;top:658px;width:70px;height:25px;line-height:25px;text-align:center;white-space:nowrap;">4.26</div><div style="font:12px 'Liberation Sans', sans-serif;color:#222;position:absolute;left:739px;top:658px;width:71px;height:25px;line-height:25px;text-align:center;white-space:nowrap;">3.44</div><div style="font:12px 'Liberation Sans', sans-serif;color:#222;position:absolute;left:811px;top:658px;width:72px;height:25px;line-height:25px;text-align:center;white-space:nowrap;">1.89</div><div style="font:12px 'Liberation Sans', sans-serif;color:#222;-webkit-text-stroke:0.1px currentColor;color:#1818b0;position:absolute;left:884px;top:658px;width:40px;height:25px;line-height:25px;text-align:center;white-space:nowrap;">负</div><div style="font:12px 'Liberation Sans', sans-serif;color:#222;-webkit-text-stroke:0.1px currentColor;color:#1818b0;position:absolute;left:925px;top:658px;width:41px;height:25px;line-height:25px;text-align:center;white-space:nowrap;">输</div><div style="font:12px 'Liberation Sans', sans-serif;color:#222;-webkit-text-stroke:0.1px currentColor;color:#d01818;position:absolute;left:967px;top:658px;width:62px;height:25px;line-height:25px;text-align:center;white-space:nowrap;">大</div><div style="font:12px 'Liberation Sans', sans-serif;color:#fff;-webkit-text-stroke:0.2px #fff;position:absolute;left:3px;top:684px;width:80px;height:25px;line-height:25px;text-align:center;white-space:nowrap;">意甲</div><div style="font:12px 'Liberation Sans', sans-serif;color:#222;position:absolute;left:84px;top:684px;width:81px;height:25px;line-height:25px;text-align:center;white-space:nowrap;">25-01-05</div><div style="font:12px 'Liberation Sans', sans-serif;color:#222;-webkit-text-stroke:0.1px currentColor;color:#107010;position:absolute;left:166px;top:684px;width:80px;height:25px;line-height:25px;text-align:center;white-space:nowrap;">佛罗伦萨</div><div style="font:12px 'Liberation Sans', sans-serif;color:#222;position:absolute;left:247px;top:684px;width:97px;height:25px;line-height:25px;text-align:center;white-space:nowrap;"><span style="color:#d01818">0-3</span>(0-1)</div><div style="font:12px 'Liberation Sans', sans-serif;color:#222;position:absolute;left:345px;top:684px;width:41px;height:25px;line-height:25px;text-align:center;white-space:nowrap;">4-2</div><div style="font:12px 'Liberation Sans', sans-serif;color:#222;-webkit-text-stroke:0.1px currentColor;position:absolute;left:387px;top:684px;width:80px;height:25px;line-height:25px;text-align:center;white-space:nowrap;">那不勒斯</div><div style="font:12px 'Liberation Sans', sans-serif;color:#222;position:absolute;left:468px;top:684px;width:52px;height:25px;line-height:25px;text-align:center;white-space:nowrap;">0.98</div><div style="font:12px 'Liberation Sans', sans-serif;color:#222;-webkit-text-stroke:0.1px currentColor;position:absolute;left:521px;top:684px;width:90px;height:25px;line-height:25px;text-align:center;white-space:nowrap;">受平/半</div><div style="font:12px 'Liberation Sans', sans-serif;color:#222;position:absolute;left:612px;top:684px;width:55px;height:25px;line-height:25px;text-align:center;white-space:nowrap;">0.91</div><div style="font:12px 'Liberation Sans', sans-serif;color:#222;position:absolute;left:668px;top:684px;width:70px;height:25px;line-height:25px;text-align:center;white-space:nowrap;">3.35</div><div style="font:12px 'Liberation Sans', sans-serif;color:#222;position:absolute;left:739px;top:684px;width:71px;height:25px;line-height:25px;text-align:center;white-space:nowrap;">3.06</div><div style="font:12px 'Liberation Sans', sans-serif;color:#222;position:absolute;left:811px;top:684px;width:72px;height:25px;line-height:25px;text-align:center;white-space:nowrap;">2.33</div><div style="font:12px 'Liberation Sans', sans-serif;color:#222;-webkit-text-stroke:0.1px currentColor;color:#1818b0;position:absolute;left:884px;top:684px;width:40px;height:25px;line-height:25px;text-align:center;white-space:nowrap;">负</div><div style="font:12px 'Liberation Sans', sans-serif;color:#222;-webkit-text-stroke:0.1px currentColor;color:#1818b0;position:absolute;left:925px;top:684px;width:41px;height:25px;line-height:25px;text-align:center;white-space:nowrap;">输</div><div style="font:12px 'Liberation Sans', sans-serif;color:#222;-webkit-text-stroke:0.1px currentColor;color:#d01818;position:absolute;left:967px;top:684px;width:62px;height:25px;line-height:25px;text-align:center;white-space:nowrap;">大</div><div style="font:12px 'Liberation Sans', sans-serif;color:#222;letter-spacing:0.25px;position:absolute;left:3px;top:710px;width:1026px;height:25px;line-height:25px;text-align:center;white-space:nowrap;">近<span style="color:#d01818">10</span>场,胜4平1负5, 胜率:<span style="color:#d01818">40%</span> 让胜率:<span style="color:#d01818">50%</span> 大率:<span style="color:#d01818">60%</span> 单率:<span style="color:#d01818">80%</span></div>
</body></html>
